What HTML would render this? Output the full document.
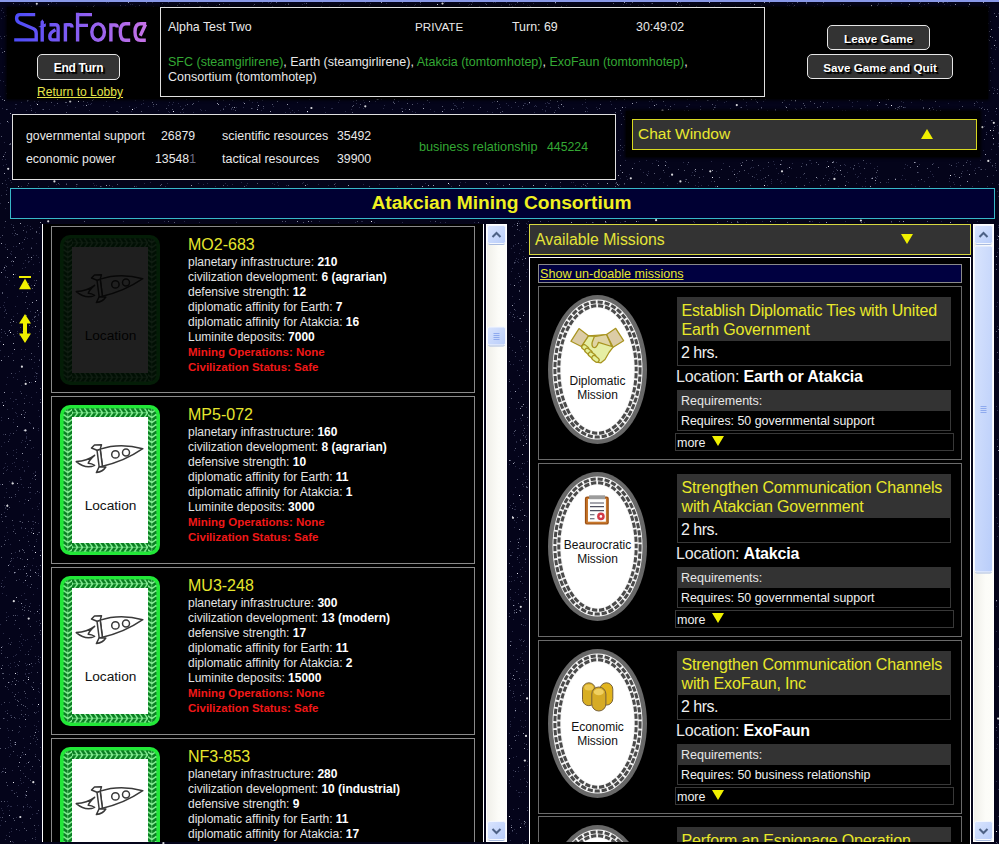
<!DOCTYPE html><html><head><meta charset="utf-8"><style>
*{margin:0;padding:0;box-sizing:border-box}
html,body{width:999px;height:844px;overflow:hidden;background:#04041a;font-family:"Liberation Sans",sans-serif;color:#e8e8e8}
.a{position:absolute}
.btn{position:absolute;background:#333333;border:1px solid #e6e6e6;border-radius:5px;color:#fff;font-weight:bold;font-size:12px;text-align:center;text-shadow:1px 1px 0 #000,2px 2px 1px #000}
.g{color:#34a834}
.box{position:absolute;border:1px solid #e0e0e0;background:#000}
.sb{position:absolute;background:linear-gradient(90deg,#f3f1e8,#fdfcf6 60%,#f0eee4);border:1px solid #fff}
.sbb{position:absolute;left:1px;width:17px;height:18px;border-radius:2px;background:linear-gradient(135deg,#d6e2fc,#bccffa);border:1px solid #e8eefc;box-shadow:0 1px 0 #a9b9d9}
.card{position:absolute;left:51px;width:424px;height:168px;border:1px solid #8a8a8a;background:#000}
.loc{position:absolute;left:8px;top:8px;width:100px;height:150px}
.loc .in{position:absolute;left:12px;top:11px;width:76px;height:126px;background:#fff;color:#000;font-size:13px;text-align:center}
.info{position:absolute;left:136px;top:9px;font-size:12px;line-height:15px;color:#e4e4e4}
.info .t{font-size:16px;color:#e6e62e;line-height:18px;margin-bottom:1px}
.info b{color:#fff}
.info .r{color:#f01818;font-weight:bold;font-size:11.5px}
.mc{position:absolute;left:538px;width:424px;height:174px;border:1px solid #6a6a6a;background:#000}
.oval{position:absolute;left:9px;top:7.5px;width:100px;height:150px}
.oval .ring{position:absolute;left:3px;top:3px;right:3px;bottom:3px;border-radius:50%;background:#d0d0d0}
.oval .in{position:absolute;left:12px;top:12px;right:12px;bottom:12px;border-radius:50%;background:#fff;color:#111;font-size:12px;text-align:center;line-height:14px}
.mt{position:absolute;left:138px;top:10px;width:274px;height:44px;background:#333333;color:#e8e82a;font-size:16px;letter-spacing:-0.16px;line-height:19px;padding:3.5px 0 0 4.5px}
.hrs{position:absolute;left:138px;top:54px;width:274px;height:25px;border:1px solid #383838;border-top:none;background:#000;color:#f0f0f0;font-size:16px;letter-spacing:-0.5px;padding:3px 0 0 3px}
.lo{position:absolute;left:137px;top:81px;font-size:16px;letter-spacing:-0.18px;color:#e8e8e8;white-space:nowrap}
.lo b{color:#fff}
.rq{position:absolute;left:138px;top:103px;width:274px;height:21px;background:#333333;color:#e8e8e8;font-size:12.5px;padding:4px 0 0 4px}
.rqs{position:absolute;left:138px;top:124px;width:274px;height:20px;border:1px solid #383838;border-top:none;background:#000;color:#f0f0f0;font-size:12.4px;padding:3px 0 0 3px}
.more{position:absolute;left:136px;top:146px;width:279px;height:18px;border:1px solid #383838;background:#000;color:#f0f0f0;font-size:12.5px;padding:2px 0 0 1px}
.tri{display:inline-block;width:0;height:0;border-left:6px solid transparent;border-right:6px solid transparent;border-top:10px solid #f0f000;margin-left:7px;vertical-align:1px}
</style></head><body>
<svg width="999" height="844" style="position:absolute;left:0;top:0"><path fill="#2a2c48" d="M185 105h1v1h-1zM381 99h1v1h-1zM104 0h1v1h-1zM549 103h1v1h-1zM930 171h1v1h-1zM514 337h1v1h-1zM860 1h1v1h-1zM489 182h1v1h-1zM665 105h1v1h-1zM513 246h1v1h-1zM623 4h1v1h-1zM795 108h1v1h-1zM28 778h1v1h-1zM996 517h1v1h-1zM520 546h1v1h-1zM519 253h1v1h-1zM457 108h1v1h-1zM3 269h1v1h-1zM982 107h1v1h-1zM19 641h1v1h-1zM270 3h1v1h-1zM17 296h1v1h-1zM520 286h1v1h-1zM162 3h1v1h-1zM1 332h1v1h-1zM512 831h1v1h-1zM510 284h1v1h-1zM1 10h1v1h-1zM510 690h1v1h-1zM202 6h1v1h-1zM32 319h1v1h-1zM31 646h1v1h-1zM304 3h1v1h-1zM904 107h1v1h-1zM510 726h1v1h-1zM827 102h1v1h-1zM886 182h1v1h-1zM39 613h1v1h-1zM32 814h1v1h-1zM417 103h1v1h-1zM668 167h1v1h-1zM18 785h1v1h-1zM208 6h1v1h-1zM844 164h1v1h-1zM3 633h1v1h-1zM856 183h1v1h-1zM516 522h1v1h-1zM750 1h1v1h-1zM2 580h1v1h-1zM519 663h1v1h-1zM6 384h1v1h-1zM714 6h1v1h-1zM35 831h1v1h-1zM515 487h1v1h-1zM31 807h1v1h-1zM446 1h1v1h-1zM4 356h1v1h-1zM169 112h1v1h-1zM805 107h1v1h-1zM34 356h1v1h-1zM12 408h1v1h-1zM414 5h1v1h-1zM695 185h1v1h-1zM20 636h1v1h-1zM10 398h1v1h-1zM16 654h1v1h-1zM526 781h1v1h-1zM493 2h1v1h-1zM6 164h1v1h-1zM77 184h1v1h-1zM522 495h1v1h-1zM515 278h1v1h-1zM40 683h1v1h-1zM178 103h1v1h-1zM13 377h1v1h-1zM509 581h1v1h-1zM14 696h1v1h-1zM15 666h1v1h-1zM997 666h1v1h-1zM998 816h1v1h-1zM9 810h1v1h-1zM94 185h1v1h-1zM383 108h1v1h-1zM870 163h1v1h-1zM39 262h1v1h-1zM525 726h1v1h-1zM773 5h1v1h-1zM457 99h1v1h-1zM16 452h1v1h-1zM1 808h1v1h-1zM878 4h1v1h-1zM298 110h1v1h-1zM21 249h1v1h-1zM454 105h1v1h-1zM35 656h1v1h-1zM509 407h1v1h-1zM621 113h1v1h-1zM329 6h1v1h-1zM646 160h1v1h-1zM4 311h1v1h-1zM33 273h1v1h-1zM7 297h1v1h-1zM984 126h1v1h-1zM25 349h1v1h-1zM361 221h1v1h-1zM29 673h1v1h-1zM15 399h1v1h-1zM711 181h1v1h-1zM25 674h1v1h-1zM653 183h1v1h-1zM509 733h1v1h-1zM6 527h1v1h-1zM778 173h1v1h-1zM172 104h1v1h-1zM42 109h1v1h-1zM967 221h1v1h-1zM9 682h1v1h-1zM302 4h1v1h-1zM997 410h1v1h-1zM232 184h1v1h-1zM527 104h1v1h-1zM15 718h1v1h-1zM21 595h1v1h-1zM76 186h1v1h-1zM990 162h1v1h-1zM512 268h1v1h-1zM649 101h1v1h-1zM7 687h1v1h-1zM776 168h1v1h-1zM986 132h1v1h-1zM27 664h1v1h-1zM26 324h1v1h-1zM9 571h1v1h-1zM924 181h1v1h-1zM29 359h1v1h-1zM809 160h1v1h-1zM4 497h1v1h-1zM715 107h1v1h-1zM996 154h1v1h-1zM5 244h1v1h-1zM0 484h1v1h-1zM522 350h1v1h-1zM384 105h1v1h-1zM817 178h1v1h-1zM153 6h1v1h-1zM26 110h1v1h-1zM524 770h1v1h-1zM15 104h1v1h-1zM523 430h1v1h-1zM996 606h1v1h-1zM59 184h1v1h-1zM33 594h1v1h-1zM183 112h1v1h-1zM806 165h1v1h-1zM751 167h1v1h-1zM339 5h1v1h-1zM518 262h1v1h-1zM513 245h1v1h-1zM15 108h1v1h-1zM11 325h1v1h-1zM2 810h1v1h-1zM38 509h1v1h-1zM4 307h1v1h-1zM9 0h1v1h-1zM526 682h1v1h-1zM510 505h1v1h-1zM35 333h1v1h-1zM26 430h1v1h-1zM412 111h1v1h-1zM652 163h1v1h-1zM3 587h1v1h-1zM23 716h1v1h-1zM223 3h1v1h-1zM40 550h1v1h-1zM16 449h1v1h-1zM13 656h1v1h-1zM757 179h1v1h-1zM131 111h1v1h-1zM9 832h1v1h-1zM509 613h1v1h-1zM5 401h1v1h-1zM18 490h1v1h-1zM331 108h1v1h-1zM30 569h1v1h-1zM686 7h1v1h-1zM31 686h1v1h-1zM29 332h1v1h-1zM13 422h1v1h-1zM336 1h1v1h-1zM460 182h1v1h-1zM31 397h1v1h-1zM231 109h1v1h-1zM15 274h1v1h-1zM30 229h1v1h-1zM30 483h1v1h-1zM118 112h1v1h-1zM762 221h1v1h-1zM11 642h1v1h-1zM32 550h1v1h-1zM998 143h1v1h-1zM523 760h1v1h-1zM23 582h1v1h-1zM771 179h1v1h-1zM911 184h1v1h-1zM18 692h1v1h-1zM817 4h1v1h-1zM220 110h1v1h-1zM513 433h1v1h-1zM24 226h1v1h-1zM518 735h1v1h-1zM542 109h1v1h-1zM525 346h1v1h-1zM28 261h1v1h-1zM0 237h1v1h-1zM10 806h1v1h-1zM290 112h1v1h-1zM12 692h1v1h-1zM26 232h1v1h-1zM587 108h1v1h-1zM35 472h1v1h-1zM527 807h1v1h-1zM527 749h1v1h-1zM11 684h1v1h-1zM17 664h1v1h-1zM23 514h1v1h-1zM523 473h1v1h-1zM430 221h1v1h-1zM734 169h1v1h-1zM966 1h1v1h-1zM990 71h1v1h-1zM521 645h1v1h-1zM967 160h1v1h-1zM998 27h1v1h-1zM17 379h1v1h-1zM928 109h1v1h-1zM40 766h1v1h-1zM771 183h1v1h-1zM14 462h1v1h-1zM23 615h1v1h-1zM4 512h1v1h-1zM527 5h1v1h-1zM840 4h1v1h-1zM217 100h1v1h-1zM509 780h1v1h-1zM993 143h1v1h-1zM685 179h1v1h-1zM948 103h1v1h-1zM527 425h1v1h-1zM207 183h1v1h-1zM527 331h1v1h-1zM514 580h1v1h-1zM5 247h1v1h-1zM998 686h1v1h-1zM515 244h1v1h-1zM332 108h1v1h-1zM38 410h1v1h-1zM514 696h1v1h-1zM198 101h1v1h-1zM33 447h1v1h-1zM499 104h1v1h-1zM872 177h1v1h-1zM35 639h1v1h-1zM38 532h1v1h-1zM979 107h1v1h-1zM4 442h1v1h-1zM173 102h1v1h-1zM3 165h1v1h-1zM660 178h1v1h-1zM996 631h1v1h-1zM23 639h1v1h-1zM566 5h1v1h-1zM522 356h1v1h-1zM27 639h1v1h-1zM826 1h1v1h-1zM445 222h1v1h-1zM658 161h1v1h-1zM0 307h1v1h-1zM767 110h1v1h-1zM37 320h1v1h-1zM524 766h1v1h-1zM25 797h1v1h-1zM513 757h1v1h-1zM392 109h1v1h-1zM285 112h1v1h-1zM19 830h1v1h-1zM21 288h1v1h-1zM961 176h1v1h-1zM885 104h1v1h-1zM0 96h1v1h-1zM993 59h1v1h-1zM21 643h1v1h-1zM325 112h1v1h-1zM857 177h1v1h-1zM857 101h1v1h-1zM12 392h1v1h-1zM511 555h1v1h-1zM674 104h1v1h-1zM942 2h1v1h-1zM29 440h1v1h-1zM991 149h1v1h-1zM167 0h1v1h-1zM123 221h1v1h-1zM6 93h1v1h-1zM514 717h1v1h-1zM6 492h1v1h-1zM20 479h1v1h-1zM519 555h1v1h-1zM511 576h1v1h-1zM35 754h1v1h-1zM30 603h1v1h-1zM796 0h1v1h-1zM24 747h1v1h-1zM13 525h1v1h-1zM510 312h1v1h-1zM575 185h1v1h-1zM997 744h1v1h-1zM28 651h1v1h-1zM969 3h1v1h-1zM518 106h1v1h-1zM602 7h1v1h-1zM17 331h1v1h-1zM991 61h1v1h-1zM865 186h1v1h-1zM512 350h1v1h-1zM271 2h1v1h-1zM511 334h1v1h-1zM302 183h1v1h-1zM31 247h1v1h-1zM988 111h1v1h-1zM525 103h1v1h-1zM35 372h1v1h-1zM7 728h1v1h-1zM6 595h1v1h-1zM988 23h1v1h-1zM106 2h1v1h-1zM241 182h1v1h-1zM197 2h1v1h-1zM956 166h1v1h-1zM548 103h1v1h-1zM515 506h1v1h-1zM487 184h1v1h-1zM479 1h1v1h-1zM924 4h1v1h-1zM14 624h1v1h-1zM25 797h1v1h-1zM997 536h1v1h-1zM4 536h1v1h-1zM1 704h1v1h-1zM955 176h1v1h-1zM665 0h1v1h-1zM164 6h1v1h-1zM495 2h1v1h-1zM517 316h1v1h-1zM26 669h1v1h-1zM305 107h1v1h-1zM902 175h1v1h-1zM36 737h1v1h-1zM277 182h1v1h-1zM911 102h1v1h-1zM850 167h1v1h-1zM518 221h1v1h-1zM12 790h1v1h-1zM363 100h1v1h-1zM35 839h1v1h-1zM991 48h1v1h-1zM132 4h1v1h-1zM510 840h1v1h-1zM29 545h1v1h-1zM19 521h1v1h-1zM31 382h1v1h-1zM611 104h1v1h-1zM36 392h1v1h-1zM897 107h1v1h-1zM335 186h1v1h-1zM928 177h1v1h-1zM523 727h1v1h-1zM666 162h1v1h-1zM106 101h1v1h-1zM8 805h1v1h-1zM571 182h1v1h-1zM997 439h1v1h-1zM967 170h1v1h-1zM38 430h1v1h-1zM877 166h1v1h-1zM13 419h1v1h-1zM992 120h1v1h-1zM13 246h1v1h-1zM26 566h1v1h-1zM10 663h1v1h-1zM21 783h1v1h-1zM38 825h1v1h-1zM35 713h1v1h-1zM519 360h1v1h-1zM6 488h1v1h-1zM901 3h1v1h-1zM8 747h1v1h-1zM520 569h1v1h-1zM522 653h1v1h-1zM715 105h1v1h-1zM307 112h1v1h-1zM468 5h1v1h-1zM520 720h1v1h-1zM468 7h1v1h-1zM534 112h1v1h-1zM936 181h1v1h-1zM38 101h1v1h-1zM39 605h1v1h-1zM30 226h1v1h-1zM528 221h1v1h-1zM0 80h1v1h-1zM134 108h1v1h-1zM518 589h1v1h-1zM994 68h1v1h-1zM800 177h1v1h-1zM5 577h1v1h-1zM13 558h1v1h-1zM596 107h1v1h-1zM11 715h1v1h-1zM708 185h1v1h-1zM997 252h1v1h-1zM765 181h1v1h-1zM8 178h1v1h-1zM485 3h1v1h-1zM520 342h1v1h-1zM5 507h1v1h-1zM970 161h1v1h-1zM38 314h1v1h-1zM8 689h1v1h-1zM5 711h1v1h-1zM796 109h1v1h-1zM738 222h1v1h-1zM998 372h1v1h-1zM4 317h1v1h-1zM520 657h1v1h-1zM189 3h1v1h-1zM8 539h1v1h-1zM517 671h1v1h-1zM526 407h1v1h-1zM610 101h1v1h-1zM876 178h1v1h-1zM4 154h1v1h-1zM974 170h1v1h-1zM526 331h1v1h-1zM983 150h1v1h-1zM33 524h1v1h-1zM997 235h1v1h-1zM289 108h1v1h-1zM21 186h1v1h-1zM39 662h1v1h-1zM515 466h1v1h-1zM32 666h1v1h-1zM13 842h1v1h-1zM2 108h1v1h-1zM96 185h1v1h-1zM25 376h1v1h-1zM792 163h1v1h-1zM12 233h1v1h-1zM24 766h1v1h-1zM153 106h1v1h-1zM288 3h1v1h-1zM103 105h1v1h-1zM795 101h1v1h-1zM975 168h1v1h-1zM516 790h1v1h-1zM21 484h1v1h-1zM13 455h1v1h-1zM30 105h1v1h-1zM833 171h1v1h-1zM25 682h1v1h-1zM10 180h1v1h-1zM478 109h1v1h-1zM520 418h1v1h-1zM26 683h1v1h-1zM35 663h1v1h-1zM520 439h1v1h-1zM787 222h1v1h-1zM24 766h1v1h-1zM535 105h1v1h-1zM23 248h1v1h-1zM13 566h1v1h-1zM444 109h1v1h-1zM29 749h1v1h-1zM16 104h1v1h-1zM27 225h1v1h-1zM21 527h1v1h-1zM40 312h1v1h-1zM492 112h1v1h-1zM19 579h1v1h-1zM25 441h1v1h-1zM616 183h1v1h-1zM15 373h1v1h-1zM327 1h1v1h-1zM555 3h1v1h-1zM15 552h1v1h-1zM995 167h1v1h-1zM340 4h1v1h-1zM11 560h1v1h-1zM22 440h1v1h-1zM514 605h1v1h-1zM303 182h1v1h-1zM90 104h1v1h-1zM38 691h1v1h-1zM789 5h1v1h-1zM32 228h1v1h-1zM522 368h1v1h-1zM954 184h1v1h-1zM199 222h1v1h-1zM520 249h1v1h-1zM38 759h1v1h-1zM717 100h1v1h-1zM516 408h1v1h-1zM965 1h1v1h-1zM527 479h1v1h-1zM236 107h1v1h-1zM522 108h1v1h-1zM12 481h1v1h-1zM526 538h1v1h-1zM89 110h1v1h-1zM625 160h1v1h-1zM31 6h1v1h-1zM434 111h1v1h-1zM956 0h1v1h-1zM5 270h1v1h-1zM997 125h1v1h-1zM88 104h1v1h-1zM8 122h1v1h-1zM988 11h1v1h-1zM907 165h1v1h-1zM0 350h1v1h-1zM338 222h1v1h-1zM513 384h1v1h-1zM148 222h1v1h-1zM519 792h1v1h-1zM518 282h1v1h-1zM23 569h1v1h-1zM39 227h1v1h-1zM307 184h1v1h-1zM905 107h1v1h-1zM862 186h1v1h-1zM527 761h1v1h-1zM753 167h1v1h-1zM35 741h1v1h-1zM30 423h1v1h-1zM977 102h1v1h-1zM740 107h1v1h-1zM761 5h1v1h-1zM4 227h1v1h-1zM667 7h1v1h-1zM527 461h1v1h-1zM29 492h1v1h-1zM0 624h1v1h-1zM14 336h1v1h-1zM646 174h1v1h-1zM904 168h1v1h-1zM30 649h1v1h-1zM2 646h1v1h-1zM887 0h1v1h-1zM987 186h1v1h-1zM36 243h1v1h-1zM203 184h1v1h-1zM525 558h1v1h-1zM519 223h1v1h-1zM37 588h1v1h-1zM949 178h1v1h-1zM949 181h1v1h-1zM3 305h1v1h-1zM201 110h1v1h-1zM513 619h1v1h-1zM253 5h1v1h-1zM1 420h1v1h-1zM620 139h1v1h-1zM996 47h1v1h-1zM21 102h1v1h-1zM35 471h1v1h-1zM4 467h1v1h-1zM525 571h1v1h-1zM998 359h1v1h-1zM262 2h1v1h-1zM620 155h1v1h-1zM12 353h1v1h-1zM747 109h1v1h-1zM21 385h1v1h-1zM36 813h1v1h-1zM514 263h1v1h-1zM998 13h1v1h-1zM328 185h1v1h-1zM15 466h1v1h-1zM525 826h1v1h-1zM38 569h1v1h-1zM179 3h1v1h-1zM510 721h1v1h-1zM17 672h1v1h-1zM644 183h1v1h-1zM687 106h1v1h-1zM962 171h1v1h-1zM509 833h1v1h-1zM905 179h1v1h-1zM922 100h1v1h-1zM91 103h1v1h-1zM988 39h1v1h-1zM516 258h1v1h-1zM19 647h1v1h-1zM842 110h1v1h-1zM561 100h1v1h-1zM518 771h1v1h-1zM34 772h1v1h-1zM20 780h1v1h-1zM15 699h1v1h-1zM597 109h1v1h-1zM25 599h1v1h-1zM559 108h1v1h-1zM184 221h1v1h-1zM34 476h1v1h-1zM684 110h1v1h-1zM668 1h1v1h-1zM25 260h1v1h-1zM989 7h1v1h-1zM13 277h1v1h-1zM26 599h1v1h-1zM643 172h1v1h-1zM26 438h1v1h-1zM620 170h1v1h-1zM40 329h1v1h-1zM672 7h1v1h-1zM15 608h1v1h-1zM30 498h1v1h-1zM996 730h1v1h-1zM716 171h1v1h-1zM19 469h1v1h-1zM406 5h1v1h-1zM324 107h1v1h-1zM649 107h1v1h-1zM527 269h1v1h-1zM523 530h1v1h-1zM825 184h1v1h-1zM763 178h1v1h-1zM87 102h1v1h-1zM644 5h1v1h-1zM5 159h1v1h-1zM34 376h1v1h-1zM36 5h1v1h-1zM512 226h1v1h-1zM586 186h1v1h-1zM992 63h1v1h-1zM29 402h1v1h-1zM73 99h1v1h-1zM533 3h1v1h-1zM4 142h1v1h-1zM976 101h1v1h-1zM33 264h1v1h-1zM36 621h1v1h-1zM32 704h1v1h-1zM516 756h1v1h-1zM36 712h1v1h-1zM998 649h1v1h-1zM524 103h1v1h-1zM411 7h1v1h-1zM376 99h1v1h-1zM24 414h1v1h-1zM527 679h1v1h-1zM774 164h1v1h-1zM28 531h1v1h-1zM22 822h1v1h-1zM519 819h1v1h-1zM885 5h1v1h-1zM36 726h1v1h-1zM6 516h1v1h-1zM1 38h1v1h-1zM33 255h1v1h-1zM624 221h1v1h-1zM286 185h1v1h-1zM27 585h1v1h-1zM37 813h1v1h-1zM495 221h1v1h-1zM7 109h1v1h-1zM513 776h1v1h-1zM11 224h1v1h-1zM664 172h1v1h-1zM29 807h1v1h-1zM21 442h1v1h-1zM379 184h1v1h-1zM4 331h1v1h-1zM519 230h1v1h-1zM523 3h1v1h-1zM523 365h1v1h-1zM16 234h1v1h-1zM524 824h1v1h-1zM715 186h1v1h-1zM515 419h1v1h-1zM268 2h1v1h-1zM17 615h1v1h-1zM143 103h1v1h-1zM872 7h1v1h-1zM31 108h1v1h-1zM511 4h1v1h-1zM620 0h1v1h-1zM812 7h1v1h-1zM509 783h1v1h-1zM525 685h1v1h-1zM26 665h1v1h-1zM620 178h1v1h-1zM515 509h1v1h-1zM829 178h1v1h-1zM518 273h1v1h-1zM36 255h1v1h-1zM514 829h1v1h-1zM0 123h1v1h-1zM513 494h1v1h-1zM1 48h1v1h-1zM515 4h1v1h-1zM158 110h1v1h-1zM7 94h1v1h-1zM56 184h1v1h-1zM272 183h1v1h-1zM510 724h1v1h-1zM1 772h1v1h-1zM375 101h1v1h-1zM525 619h1v1h-1zM949 164h1v1h-1zM8 643h1v1h-1zM21 442h1v1h-1zM509 5h1v1h-1zM3 771h1v1h-1zM550 107h1v1h-1zM278 185h1v1h-1zM193 112h1v1h-1zM27 185h1v1h-1zM545 110h1v1h-1zM509 347h1v1h-1zM819 7h1v1h-1zM25 640h1v1h-1zM998 526h1v1h-1zM393 101h1v1h-1zM6 284h1v1h-1zM369 5h1v1h-1zM871 178h1v1h-1zM94 5h1v1h-1zM54 105h1v1h-1zM17 755h1v1h-1zM26 763h1v1h-1zM509 763h1v1h-1zM874 168h1v1h-1zM920 2h1v1h-1zM792 3h1v1h-1zM730 108h1v1h-1zM587 111h1v1h-1zM198 183h1v1h-1zM14 529h1v1h-1zM814 6h1v1h-1zM24 470h1v1h-1zM785 106h1v1h-1zM223 108h1v1h-1zM38 457h1v1h-1zM606 222h1v1h-1zM154 7h1v1h-1zM986 5h1v1h-1zM517 577h1v1h-1zM9 481h1v1h-1zM523 265h1v1h-1zM791 168h1v1h-1zM32 478h1v1h-1zM520 680h1v1h-1zM273 106h1v1h-1zM13 316h1v1h-1zM996 406h1v1h-1zM261 110h1v1h-1zM356 103h1v1h-1zM514 669h1v1h-1zM998 248h1v1h-1zM619 184h1v1h-1zM527 224h1v1h-1zM509 576h1v1h-1zM813 180h1v1h-1zM669 176h1v1h-1zM12 841h1v1h-1zM38 428h1v1h-1zM48 186h1v1h-1zM339 100h1v1h-1zM510 391h1v1h-1zM838 186h1v1h-1zM34 362h1v1h-1zM860 173h1v1h-1zM285 4h1v1h-1zM17 416h1v1h-1zM20 569h1v1h-1zM787 168h1v1h-1zM200 109h1v1h-1zM32 238h1v1h-1zM10 743h1v1h-1zM7 710h1v1h-1zM693 221h1v1h-1zM13 401h1v1h-1zM243 102h1v1h-1zM76 184h1v1h-1zM513 321h1v1h-1zM760 170h1v1h-1zM24 471h1v1h-1zM21 755h1v1h-1zM998 196h1v1h-1zM509 314h1v1h-1zM38 731h1v1h-1zM953 182h1v1h-1zM22 467h1v1h-1zM866 163h1v1h-1zM223 100h1v1h-1zM627 179h1v1h-1zM247 183h1v1h-1zM761 179h1v1h-1zM27 804h1v1h-1zM5 310h1v1h-1zM673 1h1v1h-1zM525 436h1v1h-1zM1 417h1v1h-1zM947 2h1v1h-1zM121 107h1v1h-1zM958 162h1v1h-1zM547 4h1v1h-1zM40 747h1v1h-1zM39 271h1v1h-1zM548 221h1v1h-1zM506 2h1v1h-1zM33 528h1v1h-1zM14 230h1v1h-1zM32 368h1v1h-1zM515 700h1v1h-1zM32 327h1v1h-1zM520 640h1v1h-1zM6 452h1v1h-1zM343 4h1v1h-1zM2 593h1v1h-1zM939 106h1v1h-1zM1 446h1v1h-1zM25 267h1v1h-1zM516 833h1v1h-1zM746 222h1v1h-1zM257 102h1v1h-1zM1 583h1v1h-1zM765 99h1v1h-1zM514 224h1v1h-1zM985 169h1v1h-1zM4 586h1v1h-1zM30 311h1v1h-1zM611 104h1v1h-1zM165 186h1v1h-1zM998 789h1v1h-1zM278 0h1v1h-1zM135 100h1v1h-1zM519 639h1v1h-1zM24 398h1v1h-1zM367 0h1v1h-1zM516 442h1v1h-1zM16 322h1v1h-1zM38 661h1v1h-1zM990 159h1v1h-1zM49 109h1v1h-1zM27 564h1v1h-1zM586 107h1v1h-1zM32 404h1v1h-1zM390 1h1v1h-1zM9 439h1v1h-1zM14 742h1v1h-1zM39 620h1v1h-1zM525 515h1v1h-1zM895 178h1v1h-1zM3 81h1v1h-1zM27 320h1v1h-1zM20 778h1v1h-1zM17 333h1v1h-1zM846 181h1v1h-1zM34 280h1v1h-1zM512 697h1v1h-1zM25 794h1v1h-1zM959 101h1v1h-1zM38 721h1v1h-1zM803 174h1v1h-1zM469 4h1v1h-1zM31 686h1v1h-1zM246 185h1v1h-1zM616 221h1v1h-1zM515 711h1v1h-1zM22 606h1v1h-1zM183 108h1v1h-1zM624 145h1v1h-1zM996 114h1v1h-1zM761 108h1v1h-1zM28 787h1v1h-1zM694 222h1v1h-1zM180 106h1v1h-1zM433 0h1v1h-1zM51 2h1v1h-1zM527 765h1v1h-1zM513 809h1v1h-1zM137 1h1v1h-1zM319 221h1v1h-1zM930 110h1v1h-1zM40 399h1v1h-1zM740 163h1v1h-1zM39 692h1v1h-1zM26 436h1v1h-1zM853 169h1v1h-1zM16 413h1v1h-1zM521 639h1v1h-1zM787 2h1v1h-1zM518 731h1v1h-1zM33 738h1v1h-1zM167 183h1v1h-1zM38 523h1v1h-1zM11 806h1v1h-1zM31 672h1v1h-1zM37 506h1v1h-1zM652 101h1v1h-1zM25 726h1v1h-1zM550 0h1v1h-1zM38 315h1v1h-1zM0 341h1v1h-1zM558 105h1v1h-1zM877 176h1v1h-1zM31 285h1v1h-1zM463 0h1v1h-1zM24 277h1v1h-1zM27 806h1v1h-1zM523 601h1v1h-1zM35 784h1v1h-1zM573 108h1v1h-1zM487 111h1v1h-1zM522 567h1v1h-1zM14 573h1v1h-1zM811 163h1v1h-1zM514 520h1v1h-1zM585 102h1v1h-1zM10 754h1v1h-1zM9 674h1v1h-1zM870 100h1v1h-1zM39 609h1v1h-1zM36 539h1v1h-1zM513 809h1v1h-1zM514 527h1v1h-1zM18 487h1v1h-1zM512 566h1v1h-1zM918 180h1v1h-1zM519 539h1v1h-1zM37 706h1v1h-1zM397 186h1v1h-1zM523 474h1v1h-1zM510 599h1v1h-1zM523 263h1v1h-1zM593 222h1v1h-1zM858 176h1v1h-1zM998 132h1v1h-1zM526 276h1v1h-1zM692 172h1v1h-1zM227 185h1v1h-1zM12 260h1v1h-1zM525 562h1v1h-1zM23 738h1v1h-1zM26 277h1v1h-1zM231 108h1v1h-1zM36 541h1v1h-1zM161 7h1v1h-1zM7 720h1v1h-1zM169 102h1v1h-1zM18 681h1v1h-1zM624 119h1v1h-1zM515 260h1v1h-1zM15 412h1v1h-1zM38 642h1v1h-1zM23 537h1v1h-1zM663 5h1v1h-1zM28 100h1v1h-1zM2 159h1v1h-1zM517 370h1v1h-1zM19 371h1v1h-1zM21 528h1v1h-1zM5 309h1v1h-1zM523 486h1v1h-1zM23 430h1v1h-1zM5 265h1v1h-1zM772 0h1v1h-1zM825 175h1v1h-1zM522 843h1v1h-1zM703 176h1v1h-1zM972 186h1v1h-1zM27 101h1v1h-1zM677 183h1v1h-1zM11 790h1v1h-1zM19 731h1v1h-1zM125 7h1v1h-1zM35 493h1v1h-1zM689 104h1v1h-1zM639 161h1v1h-1zM689 4h1v1h-1zM630 4h1v1h-1zM1 650h1v1h-1zM36 566h1v1h-1zM680 2h1v1h-1zM13 225h1v1h-1zM4 66h1v1h-1zM526 476h1v1h-1zM207 183h1v1h-1zM787 5h1v1h-1zM515 592h1v1h-1zM573 182h1v1h-1zM524 702h1v1h-1zM398 101h1v1h-1zM521 348h1v1h-1zM515 708h1v1h-1zM679 7h1v1h-1zM14 285h1v1h-1zM547 102h1v1h-1zM440 222h1v1h-1zM26 433h1v1h-1zM17 805h1v1h-1zM607 1h1v1h-1zM402 222h1v1h-1zM750 3h1v1h-1zM995 165h1v1h-1zM524 672h1v1h-1zM402 108h1v1h-1zM129 106h1v1h-1zM5 276h1v1h-1zM8 331h1v1h-1zM20 699h1v1h-1zM941 221h1v1h-1zM1 517h1v1h-1zM511 641h1v1h-1zM518 792h1v1h-1zM108 2h1v1h-1zM520 610h1v1h-1zM25 663h1v1h-1zM992 166h1v1h-1zM852 102h1v1h-1zM527 391h1v1h-1zM996 781h1v1h-1zM623 150h1v1h-1zM463 107h1v1h-1zM38 257h1v1h-1zM523 425h1v1h-1zM14 662h1v1h-1zM25 237h1v1h-1zM1 18h1v1h-1zM546 183h1v1h-1zM511 248h1v1h-1zM858 163h1v1h-1zM803 7h1v1h-1zM732 171h1v1h-1zM784 100h1v1h-1zM40 657h1v1h-1zM12 265h1v1h-1zM21 634h1v1h-1zM845 110h1v1h-1zM522 384h1v1h-1zM512 552h1v1h-1zM465 182h1v1h-1zM521 684h1v1h-1zM516 648h1v1h-1zM5 839h1v1h-1zM30 492h1v1h-1zM511 271h1v1h-1zM16 817h1v1h-1zM487 7h1v1h-1zM9 702h1v1h-1zM38 688h1v1h-1zM363 184h1v1h-1zM27 708h1v1h-1zM168 111h1v1h-1zM921 6h1v1h-1zM216 5h1v1h-1zM297 102h1v1h-1zM25 795h1v1h-1zM539 0h1v1h-1zM3 768h1v1h-1zM16 246h1v1h-1zM763 101h1v1h-1zM21 479h1v1h-1zM775 221h1v1h-1zM436 1h1v1h-1zM997 737h1v1h-1zM995 111h1v1h-1zM6 184h1v1h-1zM274 184h1v1h-1zM7 409h1v1h-1zM39 492h1v1h-1zM638 5h1v1h-1zM6 35h1v1h-1zM525 437h1v1h-1zM513 600h1v1h-1zM338 102h1v1h-1zM24 503h1v1h-1zM244 186h1v1h-1zM168 105h1v1h-1zM1 337h1v1h-1zM38 186h1v1h-1zM23 782h1v1h-1zM353 101h1v1h-1zM430 1h1v1h-1zM292 110h1v1h-1zM834 174h1v1h-1zM10 715h1v1h-1zM525 679h1v1h-1zM809 182h1v1h-1zM523 663h1v1h-1zM7 466h1v1h-1zM26 437h1v1h-1zM515 356h1v1h-1zM700 106h1v1h-1zM83 105h1v1h-1zM11 471h1v1h-1zM32 521h1v1h-1zM664 172h1v1h-1zM513 364h1v1h-1zM886 99h1v1h-1zM524 778h1v1h-1zM492 102h1v1h-1zM8 665h1v1h-1zM27 698h1v1h-1zM33 473h1v1h-1zM724 102h1v1h-1zM522 350h1v1h-1zM22 559h1v1h-1zM135 6h1v1h-1zM10 745h1v1h-1zM101 186h1v1h-1zM998 225h1v1h-1zM11 831h1v1h-1zM4 302h1v1h-1zM509 507h1v1h-1zM524 743h1v1h-1zM708 100h1v1h-1zM978 167h1v1h-1zM24 593h1v1h-1zM420 4h1v1h-1zM38 711h1v1h-1zM252 102h1v1h-1zM27 238h1v1h-1zM878 3h1v1h-1zM444 2h1v1h-1zM20 727h1v1h-1zM735 6h1v1h-1zM996 478h1v1h-1zM620 222h1v1h-1zM36 378h1v1h-1zM932 107h1v1h-1zM25 605h1v1h-1zM24 356h1v1h-1zM136 107h1v1h-1zM23 773h1v1h-1zM472 2h1v1h-1zM527 227h1v1h-1zM7 806h1v1h-1zM527 371h1v1h-1zM515 685h1v1h-1zM6 617h1v1h-1zM524 792h1v1h-1zM777 179h1v1h-1zM17 557h1v1h-1zM7 532h1v1h-1zM514 509h1v1h-1zM812 221h1v1h-1zM517 261h1v1h-1zM526 223h1v1h-1zM950 5h1v1h-1zM515 262h1v1h-1zM888 107h1v1h-1zM767 185h1v1h-1zM545 103h1v1h-1zM365 2h1v1h-1zM977 0h1v1h-1zM512 6h1v1h-1zM13 558h1v1h-1zM622 147h1v1h-1zM33 521h1v1h-1zM0 817h1v1h-1zM35 112h1v1h-1zM998 825h1v1h-1zM970 164h1v1h-1zM997 523h1v1h-1zM164 221h1v1h-1zM656 160h1v1h-1zM670 109h1v1h-1zM741 7h1v1h-1zM12 463h1v1h-1zM5 463h1v1h-1zM998 146h1v1h-1zM891 222h1v1h-1zM456 106h1v1h-1zM511 819h1v1h-1zM978 181h1v1h-1zM351 109h1v1h-1zM34 321h1v1h-1zM25 654h1v1h-1zM582 104h1v1h-1zM22 242h1v1h-1zM638 221h1v1h-1zM526 435h1v1h-1zM514 613h1v1h-1zM651 3h1v1h-1zM355 222h1v1h-1zM905 164h1v1h-1zM992 87h1v1h-1zM17 674h1v1h-1zM27 535h1v1h-1zM27 461h1v1h-1zM141 104h1v1h-1zM34 790h1v1h-1zM359 107h1v1h-1zM754 177h1v1h-1zM509 464h1v1h-1zM514 421h1v1h-1zM22 292h1v1h-1zM771 181h1v1h-1zM780 181h1v1h-1zM34 316h1v1h-1zM35 283h1v1h-1zM444 109h1v1h-1zM514 252h1v1h-1zM997 191h1v1h-1zM865 178h1v1h-1zM150 182h1v1h-1zM26 676h1v1h-1zM586 222h1v1h-1zM554 6h1v1h-1zM525 713h1v1h-1zM526 646h1v1h-1zM459 3h1v1h-1zM0 203h1v1h-1zM143 100h1v1h-1zM522 509h1v1h-1zM518 388h1v1h-1zM40 576h1v1h-1zM17 313h1v1h-1zM996 601h1v1h-1zM521 420h1v1h-1zM297 0h1v1h-1zM679 5h1v1h-1zM990 80h1v1h-1zM756 174h1v1h-1zM1 195h1v1h-1zM19 4h1v1h-1zM4 718h1v1h-1zM521 245h1v1h-1zM520 346h1v1h-1zM205 110h1v1h-1zM14 744h1v1h-1zM522 711h1v1h-1zM667 185h1v1h-1zM523 618h1v1h-1zM643 4h1v1h-1zM7 187h1v1h-1zM101 0h1v1h-1zM525 651h1v1h-1zM994 90h1v1h-1zM665 0h1v1h-1zM525 625h1v1h-1zM529 5h1v1h-1zM28 715h1v1h-1zM272 1h1v1h-1zM23 460h1v1h-1zM995 49h1v1h-1zM461 108h1v1h-1zM979 167h1v1h-1zM449 184h1v1h-1zM374 222h1v1h-1zM789 104h1v1h-1zM34 725h1v1h-1zM996 748h1v1h-1zM663 182h1v1h-1zM401 0h1v1h-1zM819 222h1v1h-1zM335 183h1v1h-1zM109 106h1v1h-1zM6 470h1v1h-1zM835 173h1v1h-1zM180 106h1v1h-1zM6 612h1v1h-1zM5 85h1v1h-1zM75 107h1v1h-1zM997 843h1v1h-1zM639 0h1v1h-1zM806 178h1v1h-1zM233 109h1v1h-1zM6 15h1v1h-1zM184 4h1v1h-1zM23 515h1v1h-1zM513 770h1v1h-1zM519 796h1v1h-1zM415 112h1v1h-1zM7 469h1v1h-1zM10 433h1v1h-1zM599 0h1v1h-1zM23 263h1v1h-1zM340 4h1v1h-1zM19 335h1v1h-1zM827 1h1v1h-1zM899 108h1v1h-1zM560 186h1v1h-1zM25 840h1v1h-1zM9 756h1v1h-1zM847 172h1v1h-1zM231 0h1v1h-1zM974 105h1v1h-1zM648 173h1v1h-1zM136 186h1v1h-1zM555 110h1v1h-1zM16 792h1v1h-1zM294 112h1v1h-1zM39 359h1v1h-1zM401 108h1v1h-1zM473 105h1v1h-1zM524 640h1v1h-1zM526 231h1v1h-1zM0 825h1v1h-1zM857 7h1v1h-1zM25 499h1v1h-1zM781 183h1v1h-1zM32 565h1v1h-1zM423 104h1v1h-1zM35 698h1v1h-1zM5 508h1v1h-1zM529 103h1v1h-1zM15 496h1v1h-1zM526 516h1v1h-1zM243 107h1v1h-1zM523 256h1v1h-1zM7 801h1v1h-1zM263 108h1v1h-1zM726 101h1v1h-1zM34 292h1v1h-1zM624 184h1v1h-1zM13 450h1v1h-1zM581 186h1v1h-1zM994 88h1v1h-1zM10 253h1v1h-1zM526 272h1v1h-1zM509 549h1v1h-1zM14 235h1v1h-1zM83 1h1v1h-1zM34 516h1v1h-1zM364 102h1v1h-1zM8 730h1v1h-1zM7 377h1v1h-1zM12 770h1v1h-1zM309 99h1v1h-1zM536 106h1v1h-1zM696 100h1v1h-1zM26 576h1v1h-1zM26 436h1v1h-1zM38 366h1v1h-1zM11 828h1v1h-1zM838 106h1v1h-1zM832 173h1v1h-1zM509 379h1v1h-1zM520 779h1v1h-1zM944 4h1v1h-1zM687 164h1v1h-1zM28 624h1v1h-1zM21 349h1v1h-1zM521 823h1v1h-1zM36 103h1v1h-1zM546 106h1v1h-1zM307 111h1v1h-1zM23 807h1v1h-1zM4 268h1v1h-1zM0 36h1v1h-1zM152 2h1v1h-1zM2 72h1v1h-1zM711 161h1v1h-1zM15 655h1v1h-1zM41 7h1v1h-1zM2 72h1v1h-1zM518 594h1v1h-1zM5 180h1v1h-1zM867 105h1v1h-1zM998 133h1v1h-1zM998 184h1v1h-1zM22 645h1v1h-1zM867 110h1v1h-1zM1 820h1v1h-1zM933 176h1v1h-1zM39 331h1v1h-1zM30 769h1v1h-1zM225 183h1v1h-1zM5 657h1v1h-1zM125 5h1v1h-1zM521 468h1v1h-1zM39 632h1v1h-1zM508 105h1v1h-1zM901 179h1v1h-1zM229 4h1v1h-1zM8 616h1v1h-1zM9 564h1v1h-1zM39 503h1v1h-1zM513 655h1v1h-1zM29 761h1v1h-1zM30 736h1v1h-1zM514 303h1v1h-1zM756 101h1v1h-1zM36 744h1v1h-1zM524 463h1v1h-1zM46 102h1v1h-1zM836 162h1v1h-1zM6 190h1v1h-1zM977 221h1v1h-1zM233 109h1v1h-1zM515 310h1v1h-1zM19 550h1v1h-1zM28 3h1v1h-1zM625 107h1v1h-1zM915 186h1v1h-1zM197 7h1v1h-1zM523 625h1v1h-1zM427 100h1v1h-1zM17 404h1v1h-1zM25 697h1v1h-1zM781 164h1v1h-1zM21 710h1v1h-1zM252 108h1v1h-1zM511 581h1v1h-1zM788 176h1v1h-1zM919 164h1v1h-1zM28 673h1v1h-1zM11 254h1v1h-1zM757 179h1v1h-1zM33 558h1v1h-1zM822 5h1v1h-1zM168 2h1v1h-1zM783 174h1v1h-1zM796 177h1v1h-1zM207 3h1v1h-1zM40 634h1v1h-1zM694 170h1v1h-1zM519 468h1v1h-1zM32 530h1v1h-1zM659 179h1v1h-1zM87 6h1v1h-1zM993 175h1v1h-1zM16 399h1v1h-1zM151 1h1v1h-1zM852 106h1v1h-1zM629 174h1v1h-1zM322 2h1v1h-1zM148 106h1v1h-1zM997 302h1v1h-1zM10 667h1v1h-1zM992 183h1v1h-1zM363 108h1v1h-1zM10 544h1v1h-1zM8 737h1v1h-1zM997 337h1v1h-1zM519 562h1v1h-1zM405 109h1v1h-1zM3 434h1v1h-1zM723 163h1v1h-1zM23 810h1v1h-1zM985 121h1v1h-1zM748 173h1v1h-1zM524 432h1v1h-1zM36 376h1v1h-1zM683 162h1v1h-1zM2 8h1v1h-1zM506 103h1v1h-1zM763 168h1v1h-1zM40 340h1v1h-1zM901 101h1v1h-1zM20 477h1v1h-1zM262 100h1v1h-1zM6 835h1v1h-1zM522 583h1v1h-1zM701 185h1v1h-1zM551 186h1v1h-1zM20 650h1v1h-1zM524 7h1v1h-1zM513 691h1v1h-1zM781 180h1v1h-1zM526 329h1v1h-1zM517 559h1v1h-1zM848 182h1v1h-1zM864 222h1v1h-1zM24 288h1v1h-1zM698 186h1v1h-1zM22 268h1v1h-1zM501 5h1v1h-1zM34 101h1v1h-1zM425 183h1v1h-1zM523 553h1v1h-1zM36 573h1v1h-1zM793 6h1v1h-1zM802 163h1v1h-1zM407 99h1v1h-1zM15 306h1v1h-1zM11 251h1v1h-1zM24 3h1v1h-1zM918 172h1v1h-1zM512 316h1v1h-1zM16 430h1v1h-1zM35 829h1v1h-1zM510 364h1v1h-1zM698 182h1v1h-1zM18 601h1v1h-1zM370 3h1v1h-1zM236 222h1v1h-1zM215 186h1v1h-1zM175 0h1v1h-1zM859 166h1v1h-1zM875 183h1v1h-1zM345 111h1v1h-1zM28 466h1v1h-1zM990 21h1v1h-1zM514 435h1v1h-1zM845 221h1v1h-1zM785 182h1v1h-1zM429 102h1v1h-1zM810 160h1v1h-1zM932 174h1v1h-1zM249 100h1v1h-1zM36 729h1v1h-1zM5 277h1v1h-1zM510 673h1v1h-1zM525 720h1v1h-1zM523 251h1v1h-1zM687 99h1v1h-1zM615 183h1v1h-1zM27 254h1v1h-1zM19 501h1v1h-1zM903 102h1v1h-1zM24 607h1v1h-1zM810 221h1v1h-1zM691 175h1v1h-1zM517 539h1v1h-1zM37 373h1v1h-1zM773 161h1v1h-1zM34 613h1v1h-1zM980 160h1v1h-1zM736 177h1v1h-1zM164 7h1v1h-1zM521 726h1v1h-1zM933 163h1v1h-1zM318 184h1v1h-1zM26 231h1v1h-1zM980 169h1v1h-1zM768 166h1v1h-1zM982 102h1v1h-1zM950 186h1v1h-1zM386 3h1v1h-1zM993 128h1v1h-1zM746 105h1v1h-1zM66 183h1v1h-1zM23 330h1v1h-1zM144 183h1v1h-1zM522 433h1v1h-1zM514 450h1v1h-1zM620 149h1v1h-1zM362 221h1v1h-1zM865 181h1v1h-1zM518 545h1v1h-1zM114 100h1v1h-1zM9 280h1v1h-1zM67 105h1v1h-1zM22 331h1v1h-1zM20 327h1v1h-1zM35 800h1v1h-1zM521 396h1v1h-1zM455 105h1v1h-1zM25 673h1v1h-1zM514 450h1v1h-1zM415 4h1v1h-1zM996 306h1v1h-1zM998 648h1v1h-1zM31 259h1v1h-1zM257 107h1v1h-1zM453 103h1v1h-1zM35 837h1v1h-1zM836 169h1v1h-1zM511 107h1v1h-1zM512 631h1v1h-1zM518 0h1v1h-1zM28 262h1v1h-1zM998 227h1v1h-1zM272 104h1v1h-1zM30 806h1v1h-1zM956 163h1v1h-1zM26 395h1v1h-1zM634 163h1v1h-1zM746 102h1v1h-1zM93 183h1v1h-1zM18 732h1v1h-1zM26 332h1v1h-1zM4 505h1v1h-1zM500 107h1v1h-1zM3 468h1v1h-1zM117 0h1v1h-1zM150 0h1v1h-1zM3 813h1v1h-1zM23 754h1v1h-1zM5 208h1v1h-1zM37 337h1v1h-1zM997 326h1v1h-1zM112 186h1v1h-1zM648 171h1v1h-1zM7 33h1v1h-1zM827 161h1v1h-1zM888 182h1v1h-1zM732 0h1v1h-1zM536 0h1v1h-1zM32 508h1v1h-1zM871 6h1v1h-1zM640 169h1v1h-1zM130 4h1v1h-1zM534 106h1v1h-1zM494 101h1v1h-1zM225 106h1v1h-1zM31 448h1v1h-1zM180 112h1v1h-1zM521 792h1v1h-1zM11 746h1v1h-1zM22 522h1v1h-1zM38 573h1v1h-1zM29 261h1v1h-1zM512 296h1v1h-1zM845 165h1v1h-1zM23 487h1v1h-1zM11 182h1v1h-1zM19 718h1v1h-1zM186 99h1v1h-1zM510 786h1v1h-1zM518 456h1v1h-1zM855 174h1v1h-1zM232 100h1v1h-1zM39 416h1v1h-1zM497 184h1v1h-1zM545 111h1v1h-1zM516 441h1v1h-1zM38 656h1v1h-1zM430 109h1v1h-1zM56 3h1v1h-1zM834 167h1v1h-1zM39 233h1v1h-1zM3 12h1v1h-1zM998 724h1v1h-1zM750 168h1v1h-1zM39 625h1v1h-1zM626 176h1v1h-1zM451 186h1v1h-1zM510 597h1v1h-1zM20 391h1v1h-1zM9 435h1v1h-1zM737 173h1v1h-1zM29 304h1v1h-1zM8 59h1v1h-1zM626 3h1v1h-1zM4 16h1v1h-1zM518 259h1v1h-1zM474 222h1v1h-1zM686 106h1v1h-1z"/><path fill="#55586e" d="M524 428h1v1h-1zM288 4h1v1h-1zM742 162h1v1h-1zM28 257h1v1h-1zM992 165h1v1h-1zM688 182h1v1h-1zM526 486h1v1h-1zM35 316h1v1h-1zM187 1h1v1h-1zM794 5h1v1h-1zM809 221h1v1h-1zM1 801h1v1h-1zM34 712h1v1h-1zM24 610h1v1h-1zM24 239h1v1h-1zM519 538h1v1h-1zM968 6h1v1h-1zM998 494h1v1h-1zM515 448h1v1h-1zM518 243h1v1h-1zM903 107h1v1h-1zM14 820h1v1h-1zM951 165h1v1h-1zM21 359h1v1h-1zM791 100h1v1h-1zM966 162h1v1h-1zM25 380h1v1h-1zM933 109h1v1h-1zM989 90h1v1h-1zM1 329h1v1h-1zM518 603h1v1h-1zM31 353h1v1h-1zM986 134h1v1h-1zM38 346h1v1h-1zM518 402h1v1h-1zM57 103h1v1h-1zM502 111h1v1h-1zM585 185h1v1h-1zM728 179h1v1h-1zM11 373h1v1h-1zM636 102h1v1h-1zM663 170h1v1h-1zM31 248h1v1h-1zM899 221h1v1h-1zM806 2h1v1h-1zM875 177h1v1h-1zM100 186h1v1h-1zM40 623h1v1h-1zM40 565h1v1h-1zM958 0h1v1h-1zM38 810h1v1h-1zM985 115h1v1h-1zM511 748h1v1h-1zM523 435h1v1h-1zM11 261h1v1h-1zM540 221h1v1h-1zM321 6h1v1h-1zM598 183h1v1h-1zM663 101h1v1h-1zM139 5h1v1h-1zM796 186h1v1h-1zM66 112h1v1h-1zM2 183h1v1h-1zM18 569h1v1h-1zM530 6h1v1h-1zM36 280h1v1h-1zM39 360h1v1h-1zM990 1h1v1h-1zM525 593h1v1h-1zM768 175h1v1h-1zM592 222h1v1h-1zM695 171h1v1h-1zM7 277h1v1h-1zM511 825h1v1h-1zM7 249h1v1h-1zM901 106h1v1h-1zM620 145h1v1h-1zM996 727h1v1h-1zM739 180h1v1h-1zM927 221h1v1h-1zM847 0h1v1h-1zM525 597h1v1h-1zM254 4h1v1h-1zM996 269h1v1h-1zM513 503h1v1h-1zM17 234h1v1h-1zM526 242h1v1h-1zM516 671h1v1h-1zM65 102h1v1h-1zM12 681h1v1h-1zM5 821h1v1h-1zM727 221h1v1h-1zM4 702h1v1h-1zM109 185h1v1h-1zM921 179h1v1h-1zM560 182h1v1h-1zM29 325h1v1h-1zM519 678h1v1h-1zM229 104h1v1h-1zM618 185h1v1h-1zM522 414h1v1h-1zM3 718h1v1h-1zM407 103h1v1h-1zM25 714h1v1h-1zM32 838h1v1h-1zM15 233h1v1h-1zM521 321h1v1h-1zM244 186h1v1h-1zM861 222h1v1h-1zM193 103h1v1h-1zM152 102h1v1h-1zM23 230h1v1h-1zM2 673h1v1h-1zM820 106h1v1h-1zM685 181h1v1h-1zM24 607h1v1h-1zM31 663h1v1h-1zM974 103h1v1h-1zM19 540h1v1h-1zM6 313h1v1h-1zM453 109h1v1h-1zM411 184h1v1h-1zM647 175h1v1h-1zM13 227h1v1h-1zM782 102h1v1h-1zM153 104h1v1h-1zM515 430h1v1h-1zM451 109h1v1h-1zM526 487h1v1h-1zM18 665h1v1h-1zM624 99h1v1h-1zM19 551h1v1h-1zM10 740h1v1h-1zM4 801h1v1h-1zM23 410h1v1h-1zM888 179h1v1h-1zM25 302h1v1h-1zM356 100h1v1h-1zM235 110h1v1h-1zM512 508h1v1h-1zM7 785h1v1h-1zM93 99h1v1h-1zM37 739h1v1h-1zM2 665h1v1h-1zM120 5h1v1h-1zM975 173h1v1h-1zM5 152h1v1h-1zM509 616h1v1h-1zM479 6h1v1h-1zM521 624h1v1h-1zM9 144h1v1h-1zM804 185h1v1h-1zM898 107h1v1h-1zM848 6h1v1h-1zM758 109h1v1h-1zM12 730h1v1h-1zM804 105h1v1h-1zM402 2h1v1h-1zM997 89h1v1h-1zM509 686h1v1h-1zM514 431h1v1h-1zM524 312h1v1h-1zM853 168h1v1h-1zM84 221h1v1h-1zM526 744h1v1h-1zM981 169h1v1h-1zM7 713h1v1h-1zM174 222h1v1h-1zM7 454h1v1h-1zM984 109h1v1h-1zM15 615h1v1h-1zM7 335h1v1h-1zM161 184h1v1h-1zM994 68h1v1h-1zM1 557h1v1h-1zM31 584h1v1h-1zM31 532h1v1h-1zM16 580h1v1h-1zM357 221h1v1h-1zM605 222h1v1h-1zM223 185h1v1h-1zM497 108h1v1h-1zM353 105h1v1h-1zM509 381h1v1h-1zM998 329h1v1h-1zM184 7h1v1h-1zM795 0h1v1h-1zM736 181h1v1h-1zM761 107h1v1h-1zM9 638h1v1h-1zM741 107h1v1h-1zM707 100h1v1h-1zM833 162h1v1h-1zM826 167h1v1h-1zM961 173h1v1h-1zM860 108h1v1h-1zM23 680h1v1h-1zM517 548h1v1h-1zM557 101h1v1h-1zM519 610h1v1h-1zM134 186h1v1h-1zM36 373h1v1h-1zM828 180h1v1h-1zM13 433h1v1h-1zM420 2h1v1h-1zM891 221h1v1h-1zM563 106h1v1h-1zM758 1h1v1h-1zM187 104h1v1h-1zM514 462h1v1h-1zM5 540h1v1h-1zM915 162h1v1h-1zM2 292h1v1h-1zM58 183h1v1h-1zM10 644h1v1h-1zM168 221h1v1h-1zM525 840h1v1h-1zM989 40h1v1h-1zM24 403h1v1h-1zM156 104h1v1h-1zM515 352h1v1h-1zM352 112h1v1h-1zM2 817h1v1h-1zM512 678h1v1h-1zM518 767h1v1h-1zM513 314h1v1h-1zM987 176h1v1h-1zM995 40h1v1h-1zM995 163h1v1h-1zM641 182h1v1h-1zM801 108h1v1h-1zM963 165h1v1h-1zM823 2h1v1h-1zM613 3h1v1h-1zM992 37h1v1h-1zM486 4h1v1h-1zM160 185h1v1h-1zM6 266h1v1h-1zM755 99h1v1h-1zM518 808h1v1h-1zM899 106h1v1h-1zM19 628h1v1h-1zM520 611h1v1h-1zM632 2h1v1h-1zM844 176h1v1h-1zM509 745h1v1h-1zM11 717h1v1h-1zM730 7h1v1h-1zM816 162h1v1h-1zM38 343h1v1h-1zM731 222h1v1h-1zM739 171h1v1h-1zM22 522h1v1h-1zM514 309h1v1h-1zM251 108h1v1h-1zM18 766h1v1h-1zM678 169h1v1h-1zM525 234h1v1h-1zM514 612h1v1h-1zM871 178h1v1h-1zM684 170h1v1h-1zM526 439h1v1h-1zM993 144h1v1h-1zM17 796h1v1h-1zM554 112h1v1h-1zM583 184h1v1h-1zM24 430h1v1h-1zM686 179h1v1h-1zM18 701h1v1h-1zM27 292h1v1h-1zM13 531h1v1h-1zM31 257h1v1h-1zM752 160h1v1h-1zM713 109h1v1h-1zM527 782h1v1h-1zM36 231h1v1h-1zM117 184h1v1h-1zM615 112h1v1h-1zM31 6h1v1h-1zM16 829h1v1h-1zM767 0h1v1h-1zM0 748h1v1h-1zM192 104h1v1h-1zM2 99h1v1h-1zM616 99h1v1h-1zM987 109h1v1h-1zM257 183h1v1h-1zM311 221h1v1h-1zM7 509h1v1h-1zM522 259h1v1h-1zM850 1h1v1h-1zM272 104h1v1h-1zM525 822h1v1h-1zM5 434h1v1h-1zM37 672h1v1h-1zM803 103h1v1h-1zM34 735h1v1h-1zM40 630h1v1h-1zM652 3h1v1h-1zM624 183h1v1h-1zM285 221h1v1h-1zM522 463h1v1h-1zM688 162h1v1h-1zM996 331h1v1h-1zM621 124h1v1h-1zM35 312h1v1h-1zM510 641h1v1h-1zM15 494h1v1h-1zM917 172h1v1h-1zM919 3h1v1h-1zM757 102h1v1h-1zM1 514h1v1h-1zM520 581h1v1h-1zM26 315h1v1h-1zM10 561h1v1h-1zM25 776h1v1h-1zM721 169h1v1h-1zM714 107h1v1h-1zM522 520h1v1h-1zM378 99h1v1h-1zM8 356h1v1h-1zM787 222h1v1h-1zM177 5h1v1h-1zM510 555h1v1h-1zM39 532h1v1h-1zM34 635h1v1h-1zM27 308h1v1h-1zM32 766h1v1h-1zM28 283h1v1h-1zM717 222h1v1h-1zM996 264h1v1h-1zM20 521h1v1h-1zM943 2h1v1h-1zM20 770h1v1h-1zM31 110h1v1h-1zM6 782h1v1h-1zM51 102h1v1h-1zM841 174h1v1h-1zM303 222h1v1h-1zM30 743h1v1h-1zM620 110h1v1h-1zM876 172h1v1h-1zM837 170h1v1h-1zM13 751h1v1h-1zM9 507h1v1h-1zM510 460h1v1h-1zM700 109h1v1h-1zM478 222h1v1h-1zM954 174h1v1h-1zM29 606h1v1h-1zM288 185h1v1h-1zM990 57h1v1h-1zM832 107h1v1h-1zM352 106h1v1h-1zM688 110h1v1h-1zM2 521h1v1h-1zM21 704h1v1h-1zM31 528h1v1h-1zM625 221h1v1h-1zM512 6h1v1h-1zM519 291h1v1h-1zM719 177h1v1h-1zM5 748h1v1h-1zM616 182h1v1h-1zM997 93h1v1h-1zM146 2h1v1h-1zM5 768h1v1h-1zM516 609h1v1h-1zM797 2h1v1h-1zM37 534h1v1h-1zM550 100h1v1h-1zM263 106h1v1h-1zM984 139h1v1h-1zM515 740h1v1h-1zM517 2h1v1h-1zM13 334h1v1h-1zM8 441h1v1h-1zM23 705h1v1h-1zM897 109h1v1h-1zM525 559h1v1h-1zM306 6h1v1h-1zM66 102h1v1h-1zM13 3h1v1h-1zM19 726h1v1h-1zM750 185h1v1h-1zM9 497h1v1h-1zM618 150h1v1h-1zM3 473h1v1h-1zM15 694h1v1h-1zM787 110h1v1h-1zM37 491h1v1h-1zM28 487h1v1h-1zM34 825h1v1h-1zM520 440h1v1h-1zM523 502h1v1h-1zM27 100h1v1h-1zM2 771h1v1h-1zM442 106h1v1h-1zM6 620h1v1h-1zM26 830h1v1h-1zM23 806h1v1h-1zM840 165h1v1h-1zM585 111h1v1h-1zM521 360h1v1h-1zM509 563h1v1h-1zM523 105h1v1h-1zM15 533h1v1h-1zM3 673h1v1h-1zM308 221h1v1h-1zM5 516h1v1h-1zM40 388h1v1h-1zM2 293h1v1h-1zM880 182h1v1h-1zM21 393h1v1h-1zM936 110h1v1h-1zM525 482h1v1h-1zM20 558h1v1h-1zM39 760h1v1h-1zM285 221h1v1h-1zM520 510h1v1h-1zM22 752h1v1h-1zM527 487h1v1h-1zM599 108h1v1h-1zM141 111h1v1h-1zM166 108h1v1h-1zM523 693h1v1h-1zM480 107h1v1h-1zM806 3h1v1h-1zM1 546h1v1h-1zM1 653h1v1h-1zM11 497h1v1h-1zM29 422h1v1h-1zM928 3h1v1h-1zM30 570h1v1h-1zM804 173h1v1h-1zM818 164h1v1h-1zM520 610h1v1h-1zM360 104h1v1h-1zM509 361h1v1h-1zM14 696h1v1h-1zM272 6h1v1h-1zM729 166h1v1h-1zM519 299h1v1h-1zM27 575h1v1h-1zM997 446h1v1h-1zM19 661h1v1h-1zM514 610h1v1h-1zM510 589h1v1h-1zM17 705h1v1h-1zM564 0h1v1h-1zM2 52h1v1h-1zM25 528h1v1h-1zM935 101h1v1h-1zM16 680h1v1h-1zM509 4h1v1h-1zM993 93h1v1h-1zM28 610h1v1h-1zM525 380h1v1h-1zM25 693h1v1h-1zM369 186h1v1h-1zM670 106h1v1h-1zM10 143h1v1h-1zM962 106h1v1h-1zM927 168h1v1h-1zM512 336h1v1h-1zM781 160h1v1h-1zM519 290h1v1h-1zM117 111h1v1h-1zM30 818h1v1h-1zM849 100h1v1h-1zM775 110h1v1h-1zM31 359h1v1h-1zM11 558h1v1h-1zM172 109h1v1h-1zM517 557h1v1h-1zM920 99h1v1h-1zM83 101h1v1h-1zM0 728h1v1h-1zM427 100h1v1h-1zM282 221h1v1h-1zM558 107h1v1h-1zM654 173h1v1h-1zM435 221h1v1h-1zM32 288h1v1h-1zM600 104h1v1h-1zM743 99h1v1h-1zM994 13h1v1h-1zM702 169h1v1h-1zM520 700h1v1h-1zM877 5h1v1h-1zM33 682h1v1h-1zM516 735h1v1h-1zM891 3h1v1h-1zM676 4h1v1h-1zM92 100h1v1h-1zM521 406h1v1h-1zM938 167h1v1h-1zM28 541h1v1h-1zM40 454h1v1h-1zM801 166h1v1h-1zM307 1h1v1h-1zM694 175h1v1h-1zM14 678h1v1h-1zM737 221h1v1h-1zM276 2h1v1h-1zM537 7h1v1h-1zM2 235h1v1h-1zM746 160h1v1h-1zM758 165h1v1h-1zM16 458h1v1h-1zM116 111h1v1h-1zM26 296h1v1h-1zM517 517h1v1h-1zM996 170h1v1h-1zM521 685h1v1h-1zM30 440h1v1h-1zM696 6h1v1h-1zM587 183h1v1h-1zM25 706h1v1h-1zM306 3h1v1h-1zM513 693h1v1h-1zM514 736h1v1h-1zM522 406h1v1h-1zM527 417h1v1h-1zM996 842h1v1h-1zM929 186h1v1h-1zM523 641h1v1h-1zM463 102h1v1h-1zM517 229h1v1h-1zM76 184h1v1h-1zM38 659h1v1h-1zM30 611h1v1h-1zM66 184h1v1h-1zM11 553h1v1h-1zM36 232h1v1h-1zM923 108h1v1h-1zM28 521h1v1h-1zM969 4h1v1h-1zM522 186h1v1h-1zM6 109h1v1h-1zM994 126h1v1h-1zM997 352h1v1h-1zM817 107h1v1h-1zM877 170h1v1h-1zM820 185h1v1h-1zM43 109h1v1h-1zM24 691h1v1h-1zM517 479h1v1h-1zM1 586h1v1h-1zM519 340h1v1h-1zM923 107h1v1h-1zM527 341h1v1h-1zM5 686h1v1h-1zM520 695h1v1h-1zM514 262h1v1h-1zM30 587h1v1h-1zM3 678h1v1h-1zM21 714h1v1h-1zM277 101h1v1h-1zM737 222h1v1h-1zM182 109h1v1h-1zM681 5h1v1h-1zM38 575h1v1h-1zM24 828h1v1h-1zM30 487h1v1h-1zM13 818h1v1h-1zM895 108h1v1h-1zM768 162h1v1h-1zM752 176h1v1h-1zM992 135h1v1h-1zM806 164h1v1h-1zM518 548h1v1h-1zM522 660h1v1h-1zM393 102h1v1h-1zM28 654h1v1h-1zM19 550h1v1h-1zM823 102h1v1h-1zM714 181h1v1h-1zM651 99h1v1h-1zM412 104h1v1h-1zM898 107h1v1h-1zM932 164h1v1h-1zM515 771h1v1h-1zM22 549h1v1h-1zM810 101h1v1h-1zM14 717h1v1h-1zM5 333h1v1h-1zM27 444h1v1h-1zM519 318h1v1h-1zM25 412h1v1h-1zM623 116h1v1h-1zM500 112h1v1h-1zM35 756h1v1h-1zM814 103h1v1h-1zM232 107h1v1h-1zM519 375h1v1h-1zM33 427h1v1h-1zM223 109h1v1h-1zM989 31h1v1h-1zM9 836h1v1h-1zM833 161h1v1h-1zM14 793h1v1h-1zM823 178h1v1h-1zM514 235h1v1h-1zM515 102h1v1h-1zM775 109h1v1h-1zM358 0h1v1h-1zM510 541h1v1h-1zM850 5h1v1h-1zM524 823h1v1h-1zM35 522h1v1h-1zM4 36h1v1h-1zM24 552h1v1h-1zM940 110h1v1h-1zM854 165h1v1h-1zM25 447h1v1h-1zM520 280h1v1h-1zM7 657h1v1h-1zM720 3h1v1h-1zM960 185h1v1h-1zM40 402h1v1h-1zM864 168h1v1h-1zM981 108h1v1h-1zM17 700h1v1h-1zM522 484h1v1h-1zM699 177h1v1h-1zM839 7h1v1h-1zM517 659h1v1h-1zM863 160h1v1h-1zM334 184h1v1h-1zM886 104h1v1h-1zM526 599h1v1h-1zM877 105h1v1h-1zM1 136h1v1h-1zM7 504h1v1h-1zM76 6h1v1h-1zM519 276h1v1h-1zM11 319h1v1h-1zM521 576h1v1h-1zM959 109h1v1h-1zM765 177h1v1h-1zM23 550h1v1h-1zM13 360h1v1h-1zM520 499h1v1h-1zM997 239h1v1h-1zM22 609h1v1h-1zM30 780h1v1h-1zM12 520h1v1h-1zM910 167h1v1h-1zM769 2h1v1h-1zM34 317h1v1h-1zM514 317h1v1h-1zM28 183h1v1h-1zM712 104h1v1h-1zM394 103h1v1h-1zM35 479h1v1h-1zM5 221h1v1h-1zM527 810h1v1h-1zM30 626h1v1h-1zM511 398h1v1h-1zM15 620h1v1h-1zM32 687h1v1h-1zM665 161h1v1h-1zM4 51h1v1h-1zM471 4h1v1h-1zM10 322h1v1h-1zM843 4h1v1h-1zM585 99h1v1h-1zM15 572h1v1h-1zM2 402h1v1h-1zM503 185h1v1h-1zM509 683h1v1h-1zM744 170h1v1h-1zM13 483h1v1h-1zM512 830h1v1h-1zM526 786h1v1h-1zM34 321h1v1h-1zM524 597h1v1h-1zM656 104h1v1h-1zM615 186h1v1h-1zM10 144h1v1h-1zM4 544h1v1h-1zM13 615h1v1h-1zM991 120h1v1h-1zM908 6h1v1h-1zM615 108h1v1h-1zM6 194h1v1h-1z"/><path fill="#9a9cae" d="M234 107h1v1h-1zM287 104h1v1h-1zM658 165h1v1h-1zM501 0h1v1h-1zM35 475h1v1h-1zM409 109h1v1h-1zM925 0h1v1h-1zM950 222h1v1h-1zM929 108h1v1h-1zM35 326h1v1h-1zM561 104h1v1h-1zM917 166h1v1h-1zM422 186h1v1h-1zM15 684h1v1h-1zM381 2h1v1h-1zM20 223h1v1h-1zM31 257h1v1h-1zM509 184h1v1h-1zM821 0h1v1h-1zM938 2h1v1h-1zM244 103h1v1h-1zM7 80h1v1h-1zM269 7h1v1h-1zM217 103h1v1h-1zM695 169h1v1h-1zM509 758h1v1h-1zM561 6h1v1h-1zM955 4h1v1h-1zM377 99h1v1h-1zM996 600h1v1h-1zM1 272h1v1h-1zM545 185h1v1h-1zM15 744h1v1h-1zM3 156h1v1h-1zM709 2h1v1h-1zM668 109h1v1h-1zM497 101h1v1h-1zM17 426h1v1h-1zM9 330h1v1h-1zM516 612h1v1h-1zM924 1h1v1h-1zM832 162h1v1h-1zM428 185h1v1h-1zM1 243h1v1h-1zM5 772h1v1h-1zM519 529h1v1h-1zM433 185h1v1h-1zM780 164h1v1h-1zM7 121h1v1h-1zM786 107h1v1h-1zM525 258h1v1h-1zM636 221h1v1h-1zM10 113h1v1h-1zM423 108h1v1h-1zM143 7h1v1h-1zM1 668h1v1h-1zM872 178h1v1h-1zM617 184h1v1h-1zM19 243h1v1h-1zM969 4h1v1h-1zM257 109h1v1h-1zM13 343h1v1h-1zM654 105h1v1h-1zM512 305h1v1h-1zM30 576h1v1h-1zM93 6h1v1h-1zM529 102h1v1h-1zM21 603h1v1h-1zM28 677h1v1h-1zM4 100h1v1h-1zM618 175h1v1h-1zM517 223h1v1h-1zM632 168h1v1h-1zM523 733h1v1h-1zM632 103h1v1h-1zM40 555h1v1h-1zM677 2h1v1h-1zM622 107h1v1h-1zM515 710h1v1h-1zM13 261h1v1h-1zM665 165h1v1h-1zM442 111h1v1h-1zM520 318h1v1h-1zM912 0h1v1h-1zM983 2h1v1h-1zM875 180h1v1h-1zM991 29h1v1h-1zM4 392h1v1h-1zM15 257h1v1h-1zM26 791h1v1h-1zM32 302h1v1h-1zM985 154h1v1h-1zM533 185h1v1h-1zM21 414h1v1h-1zM620 165h1v1h-1zM34 546h1v1h-1zM903 221h1v1h-1zM218 104h1v1h-1zM959 177h1v1h-1zM33 428h1v1h-1zM37 611h1v1h-1zM4 173h1v1h-1zM522 454h1v1h-1zM24 566h1v1h-1zM524 821h1v1h-1zM34 285h1v1h-1zM524 515h1v1h-1zM191 185h1v1h-1zM967 181h1v1h-1zM29 664h1v1h-1zM840 170h1v1h-1zM555 2h1v1h-1zM888 99h1v1h-1zM33 689h1v1h-1zM513 675h1v1h-1zM909 4h1v1h-1zM1 647h1v1h-1zM996 16h1v1h-1zM4 51h1v1h-1zM764 2h1v1h-1zM27 559h1v1h-1zM48 4h1v1h-1zM795 100h1v1h-1zM4 267h1v1h-1zM1 360h1v1h-1zM14 572h1v1h-1zM14 349h1v1h-1zM514 285h1v1h-1zM258 105h1v1h-1zM842 0h1v1h-1zM571 222h1v1h-1zM7 257h1v1h-1zM523 315h1v1h-1zM24 417h1v1h-1zM509 460h1v1h-1zM20 757h1v1h-1zM25 719h1v1h-1zM477 1h1v1h-1zM969 174h1v1h-1zM512 516h1v1h-1zM486 183h1v1h-1zM106 185h1v1h-1zM526 443h1v1h-1zM515 391h1v1h-1zM219 4h1v1h-1zM770 221h1v1h-1zM86 105h1v1h-1zM895 179h1v1h-1zM2 484h1v1h-1zM523 404h1v1h-1zM790 0h1v1h-1zM741 165h1v1h-1zM16 597h1v1h-1zM402 111h1v1h-1zM622 172h1v1h-1zM305 185h1v1h-1zM510 645h1v1h-1zM518 542h1v1h-1zM526 546h1v1h-1zM754 4h1v1h-1zM19 762h1v1h-1zM996 108h1v1h-1zM40 222h1v1h-1zM348 185h1v1h-1zM789 167h1v1h-1zM28 500h1v1h-1zM870 186h1v1h-1zM37 310h1v1h-1zM297 221h1v1h-1zM517 225h1v1h-1zM240 1h1v1h-1zM394 99h1v1h-1zM624 2h1v1h-1zM313 1h1v1h-1zM8 202h1v1h-1zM15 742h1v1h-1zM826 222h1v1h-1zM914 162h1v1h-1zM816 177h1v1h-1zM993 130h1v1h-1zM459 185h1v1h-1zM994 45h1v1h-1zM8 418h1v1h-1zM9 815h1v1h-1zM13 321h1v1h-1zM308 221h1v1h-1zM10 841h1v1h-1zM845 185h1v1h-1zM524 748h1v1h-1zM511 827h1v1h-1zM36 300h1v1h-1zM17 483h1v1h-1zM18 186h1v1h-1zM26 573h1v1h-1zM25 754h1v1h-1zM751 99h1v1h-1zM990 36h1v1h-1zM8 565h1v1h-1zM605 221h1v1h-1zM35 732h1v1h-1zM522 415h1v1h-1zM712 170h1v1h-1zM523 445h1v1h-1zM28 762h1v1h-1zM57 99h1v1h-1zM26 795h1v1h-1zM998 450h1v1h-1zM607 183h1v1h-1zM22 453h1v1h-1zM128 2h1v1h-1zM173 1h1v1h-1zM520 408h1v1h-1zM717 186h1v1h-1zM29 382h1v1h-1zM514 679h1v1h-1zM998 236h1v1h-1zM369 101h1v1h-1zM903 0h1v1h-1zM879 102h1v1h-1zM513 605h1v1h-1zM25 580h1v1h-1zM734 174h1v1h-1zM270 111h1v1h-1zM35 572h1v1h-1zM8 682h1v1h-1zM772 7h1v1h-1zM513 463h1v1h-1zM996 256h1v1h-1z"/><path fill="#e8e8f0" d="M173 111h1v1h-1zM37 104h1v1h-1zM15 673h1v1h-1zM307 111h1v1h-1zM437 4h1v1h-1zM891 105h1v1h-1zM448 183h1v1h-1zM517 573h1v1h-1zM950 175h1v1h-1zM28 679h1v1h-1zM828 166h1v1h-1zM35 552h1v1h-1zM35 381h1v1h-1zM871 5h1v1h-1zM13 782h1v1h-1zM371 221h1v1h-1zM3 405h1v1h-1zM519 495h1v1h-1zM10 332h1v1h-1zM990 130h1v1h-1zM996 831h1v1h-1zM993 138h1v1h-1zM712 177h1v1h-1zM520 827h1v1h-1zM38 704h1v1h-1zM78 101h1v1h-1zM33 533h1v1h-1zM132 109h1v1h-1zM509 816h1v1h-1zM3 344h1v1h-1zM764 185h1v1h-1zM13 274h1v1h-1z"/><circle cx="8.2" cy="168.8" r="1.1" fill="#fff" fill-opacity="0.85"/><circle cx="200.2" cy="7.4" r="1.1" fill="#fff" fill-opacity="0.85"/><circle cx="710.3" cy="171.3" r="1.1" fill="#fff" fill-opacity="0.85"/><circle cx="13.8" cy="601.2" r="1.1" fill="#fff" fill-opacity="0.85"/><circle cx="25.7" cy="383.9" r="1.1" fill="#fff" fill-opacity="0.85"/><circle cx="54.4" cy="181.4" r="1.1" fill="#fff" fill-opacity="0.85"/><circle cx="630.8" cy="178.3" r="1.1" fill="#fff" fill-opacity="0.85"/><circle cx="736.8" cy="105.1" r="1.1" fill="#fff" fill-opacity="0.85"/><circle cx="782.0" cy="171.3" r="1.1" fill="#fff" fill-opacity="0.85"/><circle cx="520.8" cy="606.8" r="1.1" fill="#fff" fill-opacity="0.85"/><circle cx="988.3" cy="160.9" r="1.1" fill="#fff" fill-opacity="0.85"/><circle cx="524.9" cy="760.6" r="1.1" fill="#fff" fill-opacity="0.85"/><circle cx="25.4" cy="430.4" r="1.1" fill="#fff" fill-opacity="0.85"/><circle cx="20.3" cy="817.0" r="1.1" fill="#fff" fill-opacity="0.85"/><circle cx="7.3" cy="505.8" r="1.1" fill="#fff" fill-opacity="0.85"/><circle cx="526.0" cy="735.9" r="1.1" fill="#fff" fill-opacity="0.85"/><circle cx="680.4" cy="181.4" r="1.1" fill="#fff" fill-opacity="0.85"/><circle cx="513.0" cy="517.8" r="1.1" fill="#fff" fill-opacity="0.85"/><circle cx="28.7" cy="618.6" r="1.1" fill="#fff" fill-opacity="0.85"/><circle cx="21.9" cy="366.7" r="1.1" fill="#fff" fill-opacity="0.85"/><circle cx="656.1" cy="220.2" r="1.1" fill="#fff" fill-opacity="0.85"/><circle cx="998.1" cy="718.6" r="1.1" fill="#fff" fill-opacity="0.85"/><circle cx="365.3" cy="106.3" r="1.1" fill="#fff" fill-opacity="0.85"/><circle cx="895.5" cy="843.9" r="1.1" fill="#fff" fill-opacity="0.85"/><circle cx="33.3" cy="782.2" r="1.1" fill="#fff" fill-opacity="0.85"/><circle cx="12.6" cy="483.4" r="1.1" fill="#fff" fill-opacity="0.85"/><circle cx="48.2" cy="221.3" r="1.1" fill="#fff" fill-opacity="0.85"/><circle cx="70.2" cy="101.5" r="1.1" fill="#fff" fill-opacity="0.85"/><circle cx="442.5" cy="3.6" r="1.1" fill="#fff" fill-opacity="0.85"/><circle cx="860.9" cy="220.5" r="1.1" fill="#fff" fill-opacity="0.85"/><circle cx="311.4" cy="108.0" r="1.1" fill="#fff" fill-opacity="0.85"/><circle cx="993.8" cy="122.8" r="1.1" fill="#fff" fill-opacity="0.85"/><circle cx="834.4" cy="178.9" r="1.1" fill="#fff" fill-opacity="0.85"/><circle cx="543.4" cy="843.6" r="1.1" fill="#fff" fill-opacity="0.85"/><circle cx="672.1" cy="174.7" r="1.1" fill="#fff" fill-opacity="0.85"/><circle cx="527.1" cy="698.4" r="1.1" fill="#fff" fill-opacity="0.85"/><circle cx="982.3" cy="127.2" r="1.1" fill="#fff" fill-opacity="0.85"/><circle cx="662.5" cy="110.6" r="1.1" fill="#fff" fill-opacity="0.85"/><circle cx="163.4" cy="843.1" r="1.1" fill="#fff" fill-opacity="0.85"/><circle cx="36.8" cy="3.8" r="1.1" fill="#fff" fill-opacity="0.85"/></svg>
<div class="a" style="left:7px;top:7px;width:981px;height:92px;background:#000;box-shadow:0 0 3px 1px #000"></div>
<div class="a" style="left:0;top:0;width:999px;height:2px;background:#8898e8"></div>
<svg class="a" style="left:0;top:0" width="160" height="50" viewBox="0 0 160 50">
<defs><linearGradient id="lg" x1="14" y1="0" x2="147" y2="0" gradientUnits="userSpaceOnUse"><stop offset="0" stop-color="#4c4cf8"/><stop offset="0.5" stop-color="#8a5ef2"/><stop offset="1" stop-color="#c672e6"/></linearGradient></defs>
<g fill="none" stroke="url(#lg)" stroke-width="3.4">
<path d="M35.2,14.6 L20,14.6 Q16.6,14.6 16.6,18.2 Q16.6,21.4 19.6,22.8 L33.6,28.8 Q36.2,30 36.2,33.4 L36.2,39.9 L14.2,39.9"/>
<path d="M42.2,41.6 L42.2,21.5"/>
<path d="M49.5,24.7 L55.5,24.7 Q58.1,24.7 58.1,27.5 L58.1,41.6 M58.1,39.9 L52.5,39.9 Q49.8,39.9 49.8,36.5 Q49.8,33.2 52.5,31.6 L55.5,29.8"/>
<path d="M65.4,41.6 L65.4,23.2 M65.4,24.7 L69.8,24.7 Q72,24.7 72,27.5"/>
<path d="M77.6,41.6 L77.6,12.8 M77.6,14.6 L92,14.6 M79,25.4 L88,25.4"/>
<ellipse cx="98.1" cy="32.1" rx="6.3" ry="8.2"/>
<path d="M110.9,41.6 L110.9,23.2 M110.9,25 L115,25 Q117.2,25 117.2,27.5"/>
<path d="M130.2,23.8 L125.5,23.8 Q120.3,23.8 120.3,32 Q120.3,40.3 125.5,40.3 L130.2,40.3"/>
<path d="M146.2,23.8 L140.5,23.8 Q135,23.8 135,32 Q135,40.3 140.5,40.3 L145.8,40.3 M145.5,24.5 L140.2,35.8"/>
</g>
<g fill="url(#lg)"><polygon points="40.5,22 42.3,19.2 44,22"/><polygon points="38.2,27 45.8,23.2 45.8,26.6 43,27.4"/></g>
</svg>

<div class="btn" style="left:37px;top:54px;width:83px;height:26px;line-height:26px;font-size:12px;letter-spacing:-0.3px">End Turn</div>
<div class="a" style="left:37px;top:85px;font-size:12.1px;color:#e6e64a;text-decoration:underline">Return to Lobby</div>
<div class="box" style="left:160px;top:7px;width:605px;height:90px"></div>
<div class="a" style="left:168px;top:20px;font-size:12.4px;white-space:nowrap">Alpha Test Two</div>
<div class="a" style="left:415px;top:20px;font-size:11.7px">PRIVATE</div>
<div class="a" style="left:512px;top:20px;font-size:12.4px">Turn: 69</div>
<div class="a" style="left:636px;top:20px;font-size:12.4px">30:49:02</div>
<div class="a" style="left:168px;top:55px;font-size:12.5px;line-height:15px;white-space:nowrap"><span class="g">SFC (steamgirlirene)</span>, Earth (steamgirlirene), <span class="g">Atakcia (tomtomhotep)</span>, <span class="g">ExoFaun (tomtomhotep)</span>,<br>Consortium (tomtomhotep)</div>
<div class="btn" style="left:827px;top:25px;width:103px;height:25px;line-height:26px;font-size:11.7px">Leave Game</div>
<div class="btn" style="left:807px;top:54px;width:146px;height:25px;line-height:26px;font-size:11.7px">Save Game and Quit</div>
<div class="box" style="left:12px;top:114px;width:604px;height:66px"></div>
<div class="a" style="left:26px;top:129px;font-size:12.3px;white-space:nowrap">governmental support</div>
<div class="a" style="left:161px;top:129px;font-size:12.3px;white-space:nowrap">26879</div>
<div class="a" style="left:26px;top:152px;font-size:12.3px;white-space:nowrap">economic power</div>
<div class="a" style="left:155px;top:152px;font-size:12.3px;white-space:nowrap">13548<span style="color:#707088">1</span></div>
<div class="a" style="left:222px;top:129px;font-size:12.5px;white-space:nowrap">scientific resources</div>
<div class="a" style="left:337px;top:129px;font-size:12.3px;white-space:nowrap">35492</div>
<div class="a" style="left:222px;top:152px;font-size:12.5px;white-space:nowrap">tactical resources</div>
<div class="a" style="left:337px;top:152px;font-size:12.3px;white-space:nowrap">39900</div>
<div class="a g" style="left:419px;top:140px;font-size:12.7px;white-space:nowrap">business relationship</div>
<div class="a g" style="left:547px;top:140px;font-size:12.3px;white-space:nowrap">445224</div>
<div class="a" style="left:626px;top:111px;width:354px;height:46px;background:#000;box-shadow:0 0 3px 1px #000"></div>
<div class="a" style="left:632px;top:119px;width:345px;height:31px;background:#333333;border:1px solid #d8d820"></div>
<div class="a" style="left:638px;top:125px;font-size:15.5px;color:#e8e830">Chat Window</div>
<div class="a" style="left:921px;top:129px;width:0;height:0;border-left:6px solid transparent;border-right:6px solid transparent;border-bottom:10px solid #f0f000"></div>
<div class="a" style="left:10px;top:188px;width:985px;height:31px;background:#000033;border:1px solid #38b8c8"></div>
<div class="a" style="left:0;top:192px;width:1003px;text-align:center;font-size:19.2px;font-weight:bold;color:#f0f020">Atakcian Mining Consortium</div>
<svg class="a" style="left:19px;top:275.5px" width="13" height="14"><rect x="0" y="0" width="12" height="2" fill="#f0f000"/><polygon points="6,2.5 12,13.2 0,13.2" fill="#f0f000"/></svg>
<svg class="a" style="left:19px;top:314px" width="13" height="30"><polygon points="6,0 12,9.5 8,9.5 8,19.5 12,19.5 6,29 0,19.5 4,19.5 4,9.5 0,9.5" fill="#f0f000"/></svg>
<div class="a" style="left:42px;top:224px;width:442px;height:618px;background:#000;border-left:1px solid #fff;border-right:1px solid #fff;overflow:hidden">
<div class="card" style="left:8px;top:2px;height:167px">
<div class="loc" style="opacity:0.12;"><svg width="100" height="150" style="position:absolute;left:0;top:0"><defs><pattern id="pv0" patternUnits="userSpaceOnUse" x="3.6" y="0" width="8.4" height="5"><rect width="8.4" height="5" fill="#8cf59a"/><path fill="#0a7e22" d="M0,0.4 L4,3.2 L4,6.6 L0,3.8 Z M0,-4.6 L4,-1.8 L4,1.6 L0,-1.2 Z M8.4,0.4 L4.6,3.2 L4.6,6.6 L8.4,3.8 Z M8.4,-4.6 L4.6,-1.8 L4.6,1.6 L8.4,-1.2 Z"/></pattern><pattern id="ph0" patternUnits="userSpaceOnUse" x="0" y="3.6" width="5" height="8.4"><rect width="5" height="8.4" fill="#8cf59a"/><path fill="#0a7e22" d="M0.4,0 L3.2,4 L6.6,4 L3.8,0 Z M-4.6,0 L-1.8,4 L1.6,4 L-1.2,0 Z M0.4,8.4 L3.2,4.6 L6.6,4.6 L3.8,8.4 Z M-4.6,8.4 L-1.8,4.6 L1.6,4.6 L-1.2,8.4 Z"/></pattern></defs><rect x="0" y="0" width="100" height="150" rx="10" fill="#22e838"/><rect x="3.6" y="3.6" width="92.8" height="142.8" rx="6.5" fill="url(#pv0)"/><rect x="12" y="3.6" width="76" height="8.4" fill="url(#ph0)"/><rect x="12" y="138" width="76" height="8.4" fill="url(#ph0)"/><rect x="12" y="12" width="76" height="126" fill="#fff"/><g fill="none" stroke="#3a3a3a" stroke-width="1.5" stroke-linejoin="round" stroke-linecap="round" transform="translate(0,1)"><path d="M40.2,43.1 Q60,36.5 82.8,42.7 Q64,55.5 42.4,60.2 Z" fill="#fff"/><path d="M37,44.2 L40.2,43.1 L42.4,60.2 L39.2,61 Z" fill="#fff"/><path d="M31.5,42 L34.5,39 L41.5,38.8 L40.2,43.1 L37,44.2 Z" fill="#fff"/><path d="M39,61 L45.8,61 Q43,65.5 36.4,66.6 Z" fill="#fff"/><path d="M16.2,55.6 Q27,55 34.6,49.3 Q29.5,53.5 28.2,57.3 Q31.8,57.6 34.6,59.3 Q26,63.5 16.2,55.6 Z" fill="#fff"/><circle cx="55.4" cy="48.4" r="3.7"/><circle cx="66" cy="46.5" r="3.5"/></g><text x="50.5" y="104.5" text-anchor="middle" font-family="Liberation Sans" font-size="13.7" fill="#111">Location</text></svg></div>
<div class="info"><div class="t">MO2-683</div>planetary infrastructure: <b>210</b><br>civilization development: <b>6 (agrarian)</b><br>defensive strength: <b>12</b><br>diplomatic affinity for Earth: <b>7</b><br>diplomatic affinity for Atakcia: <b>16</b><br>Luminite deposits: <b>7000</b><br><span class="r">Mining Operations: None</span><br><span class="r">Civilization Status: Safe</span></div>
</div>
<div class="card" style="left:8px;top:172px;height:168px">
<div class="loc" style=""><svg width="100" height="150" style="position:absolute;left:0;top:0"><defs><pattern id="pv1" patternUnits="userSpaceOnUse" x="3.6" y="0" width="8.4" height="5"><rect width="8.4" height="5" fill="#8cf59a"/><path fill="#0a7e22" d="M0,0.4 L4,3.2 L4,6.6 L0,3.8 Z M0,-4.6 L4,-1.8 L4,1.6 L0,-1.2 Z M8.4,0.4 L4.6,3.2 L4.6,6.6 L8.4,3.8 Z M8.4,-4.6 L4.6,-1.8 L4.6,1.6 L8.4,-1.2 Z"/></pattern><pattern id="ph1" patternUnits="userSpaceOnUse" x="0" y="3.6" width="5" height="8.4"><rect width="5" height="8.4" fill="#8cf59a"/><path fill="#0a7e22" d="M0.4,0 L3.2,4 L6.6,4 L3.8,0 Z M-4.6,0 L-1.8,4 L1.6,4 L-1.2,0 Z M0.4,8.4 L3.2,4.6 L6.6,4.6 L3.8,8.4 Z M-4.6,8.4 L-1.8,4.6 L1.6,4.6 L-1.2,8.4 Z"/></pattern></defs><rect x="0" y="0" width="100" height="150" rx="10" fill="#22e838"/><rect x="3.6" y="3.6" width="92.8" height="142.8" rx="6.5" fill="url(#pv1)"/><rect x="12" y="3.6" width="76" height="8.4" fill="url(#ph1)"/><rect x="12" y="138" width="76" height="8.4" fill="url(#ph1)"/><rect x="12" y="12" width="76" height="126" fill="#fff"/><g fill="none" stroke="#3a3a3a" stroke-width="1.5" stroke-linejoin="round" stroke-linecap="round" transform="translate(0,1)"><path d="M40.2,43.1 Q60,36.5 82.8,42.7 Q64,55.5 42.4,60.2 Z" fill="#fff"/><path d="M37,44.2 L40.2,43.1 L42.4,60.2 L39.2,61 Z" fill="#fff"/><path d="M31.5,42 L34.5,39 L41.5,38.8 L40.2,43.1 L37,44.2 Z" fill="#fff"/><path d="M39,61 L45.8,61 Q43,65.5 36.4,66.6 Z" fill="#fff"/><path d="M16.2,55.6 Q27,55 34.6,49.3 Q29.5,53.5 28.2,57.3 Q31.8,57.6 34.6,59.3 Q26,63.5 16.2,55.6 Z" fill="#fff"/><circle cx="55.4" cy="48.4" r="3.7"/><circle cx="66" cy="46.5" r="3.5"/></g><text x="50.5" y="104.5" text-anchor="middle" font-family="Liberation Sans" font-size="13.7" fill="#111">Location</text></svg></div>
<div class="info"><div class="t">MP5-072</div>planetary infrastructure: <b>160</b><br>civilization development: <b>8 (agrarian)</b><br>defensive strength: <b>10</b><br>diplomatic affinity for Earth: <b>11</b><br>diplomatic affinity for Atakcia: <b>1</b><br>Luminite deposits: <b>3000</b><br><span class="r">Mining Operations: None</span><br><span class="r">Civilization Status: Safe</span></div>
</div>
<div class="card" style="left:8px;top:343px;height:168px">
<div class="loc" style=""><svg width="100" height="150" style="position:absolute;left:0;top:0"><defs><pattern id="pv2" patternUnits="userSpaceOnUse" x="3.6" y="0" width="8.4" height="5"><rect width="8.4" height="5" fill="#8cf59a"/><path fill="#0a7e22" d="M0,0.4 L4,3.2 L4,6.6 L0,3.8 Z M0,-4.6 L4,-1.8 L4,1.6 L0,-1.2 Z M8.4,0.4 L4.6,3.2 L4.6,6.6 L8.4,3.8 Z M8.4,-4.6 L4.6,-1.8 L4.6,1.6 L8.4,-1.2 Z"/></pattern><pattern id="ph2" patternUnits="userSpaceOnUse" x="0" y="3.6" width="5" height="8.4"><rect width="5" height="8.4" fill="#8cf59a"/><path fill="#0a7e22" d="M0.4,0 L3.2,4 L6.6,4 L3.8,0 Z M-4.6,0 L-1.8,4 L1.6,4 L-1.2,0 Z M0.4,8.4 L3.2,4.6 L6.6,4.6 L3.8,8.4 Z M-4.6,8.4 L-1.8,4.6 L1.6,4.6 L-1.2,8.4 Z"/></pattern></defs><rect x="0" y="0" width="100" height="150" rx="10" fill="#22e838"/><rect x="3.6" y="3.6" width="92.8" height="142.8" rx="6.5" fill="url(#pv2)"/><rect x="12" y="3.6" width="76" height="8.4" fill="url(#ph2)"/><rect x="12" y="138" width="76" height="8.4" fill="url(#ph2)"/><rect x="12" y="12" width="76" height="126" fill="#fff"/><g fill="none" stroke="#3a3a3a" stroke-width="1.5" stroke-linejoin="round" stroke-linecap="round" transform="translate(0,1)"><path d="M40.2,43.1 Q60,36.5 82.8,42.7 Q64,55.5 42.4,60.2 Z" fill="#fff"/><path d="M37,44.2 L40.2,43.1 L42.4,60.2 L39.2,61 Z" fill="#fff"/><path d="M31.5,42 L34.5,39 L41.5,38.8 L40.2,43.1 L37,44.2 Z" fill="#fff"/><path d="M39,61 L45.8,61 Q43,65.5 36.4,66.6 Z" fill="#fff"/><path d="M16.2,55.6 Q27,55 34.6,49.3 Q29.5,53.5 28.2,57.3 Q31.8,57.6 34.6,59.3 Q26,63.5 16.2,55.6 Z" fill="#fff"/><circle cx="55.4" cy="48.4" r="3.7"/><circle cx="66" cy="46.5" r="3.5"/></g><text x="50.5" y="104.5" text-anchor="middle" font-family="Liberation Sans" font-size="13.7" fill="#111">Location</text></svg></div>
<div class="info"><div class="t">MU3-248</div>planetary infrastructure: <b>300</b><br>civilization development: <b>13 (modern)</b><br>defensive strength: <b>17</b><br>diplomatic affinity for Earth: <b>11</b><br>diplomatic affinity for Atakcia: <b>2</b><br>Luminite deposits: <b>15000</b><br><span class="r">Mining Operations: None</span><br><span class="r">Civilization Status: Safe</span></div>
</div>
<div class="card" style="left:8px;top:514px;height:168px">
<div class="loc" style=""><svg width="100" height="150" style="position:absolute;left:0;top:0"><defs><pattern id="pv3" patternUnits="userSpaceOnUse" x="3.6" y="0" width="8.4" height="5"><rect width="8.4" height="5" fill="#8cf59a"/><path fill="#0a7e22" d="M0,0.4 L4,3.2 L4,6.6 L0,3.8 Z M0,-4.6 L4,-1.8 L4,1.6 L0,-1.2 Z M8.4,0.4 L4.6,3.2 L4.6,6.6 L8.4,3.8 Z M8.4,-4.6 L4.6,-1.8 L4.6,1.6 L8.4,-1.2 Z"/></pattern><pattern id="ph3" patternUnits="userSpaceOnUse" x="0" y="3.6" width="5" height="8.4"><rect width="5" height="8.4" fill="#8cf59a"/><path fill="#0a7e22" d="M0.4,0 L3.2,4 L6.6,4 L3.8,0 Z M-4.6,0 L-1.8,4 L1.6,4 L-1.2,0 Z M0.4,8.4 L3.2,4.6 L6.6,4.6 L3.8,8.4 Z M-4.6,8.4 L-1.8,4.6 L1.6,4.6 L-1.2,8.4 Z"/></pattern></defs><rect x="0" y="0" width="100" height="150" rx="10" fill="#22e838"/><rect x="3.6" y="3.6" width="92.8" height="142.8" rx="6.5" fill="url(#pv3)"/><rect x="12" y="3.6" width="76" height="8.4" fill="url(#ph3)"/><rect x="12" y="138" width="76" height="8.4" fill="url(#ph3)"/><rect x="12" y="12" width="76" height="126" fill="#fff"/><g fill="none" stroke="#3a3a3a" stroke-width="1.5" stroke-linejoin="round" stroke-linecap="round" transform="translate(0,1)"><path d="M40.2,43.1 Q60,36.5 82.8,42.7 Q64,55.5 42.4,60.2 Z" fill="#fff"/><path d="M37,44.2 L40.2,43.1 L42.4,60.2 L39.2,61 Z" fill="#fff"/><path d="M31.5,42 L34.5,39 L41.5,38.8 L40.2,43.1 L37,44.2 Z" fill="#fff"/><path d="M39,61 L45.8,61 Q43,65.5 36.4,66.6 Z" fill="#fff"/><path d="M16.2,55.6 Q27,55 34.6,49.3 Q29.5,53.5 28.2,57.3 Q31.8,57.6 34.6,59.3 Q26,63.5 16.2,55.6 Z" fill="#fff"/><circle cx="55.4" cy="48.4" r="3.7"/><circle cx="66" cy="46.5" r="3.5"/></g><text x="50.5" y="104.5" text-anchor="middle" font-family="Liberation Sans" font-size="13.7" fill="#111">Location</text></svg></div>
<div class="info"><div class="t">NF3-853</div>planetary infrastructure: <b>280</b><br>civilization development: <b>10 (industrial)</b><br>defensive strength: <b>9</b><br>diplomatic affinity for Earth: <b>11</b><br>diplomatic affinity for Atakcia: <b>17</b><br>Luminite deposits: <b>?</b><br><span class="r">Mining Operations: None</span><br><span class="r">Civilization Status: Safe</span></div>
</div>
</div>
<svg class="a" style="left:486px;top:224px" width="21" height="618"><defs><linearGradient id="trL" x1="0" x2="1" y1="0" y2="0"><stop offset="0" stop-color="#efeee8"/><stop offset="0.6" stop-color="#fcfcf8"/><stop offset="1" stop-color="#fdfdf9"/></linearGradient><linearGradient id="btL" x1="0" x2="1" y1="0" y2="1"><stop offset="0" stop-color="#d9e4fd"/><stop offset="1" stop-color="#b9cdfa"/></linearGradient></defs><rect x="0" y="0" width="21" height="618" fill="url(#trL)"/><rect x="0.5" y="0.5" width="20" height="617" fill="none" stroke="#fff"/><rect x="2" y="2" width="17" height="19" rx="2" fill="#a9bbdf"/><rect x="1.5" y="1.5" width="18" height="18" rx="2" fill="url(#btL)" stroke="#f4f7fe"/><polyline points="6.5,13 10.5,9 14.5,13" fill="none" stroke="#4d6185" stroke-width="2"/><rect x="2" y="598" width="17" height="19" rx="2" fill="#a9bbdf"/><rect x="1.5" y="597.5" width="18" height="18" rx="2" fill="url(#btL)" stroke="#f4f7fe"/><polyline points="6.5,605 10.5,609 14.5,605" fill="none" stroke="#4d6185" stroke-width="2"/><rect x="2" y="103.5" width="17" height="19" rx="2" fill="#a9bbdf"/><rect x="1.5" y="103.0" width="18" height="18" rx="2" fill="url(#btL)" stroke="#f4f7fe"/><line x1="7.5" y1="109.5" x2="13.5" y2="109.5" stroke="#8faaee" stroke-width="1"/><line x1="7.5" y1="111.5" x2="13.5" y2="111.5" stroke="#8faaee" stroke-width="1"/><line x1="7.5" y1="113.5" x2="13.5" y2="113.5" stroke="#8faaee" stroke-width="1"/><line x1="7.5" y1="115.5" x2="13.5" y2="115.5" stroke="#8faaee" stroke-width="1"/></svg>
<div class="a" style="left:529px;top:224px;width:442px;height:31px;background:#333333;border:1px solid #d8d840"></div>
<div class="a" style="left:535px;top:231px;font-size:15.8px;color:#e4e438">Available Missions</div>
<div class="a" style="left:901px;top:234px;width:0;height:0;border-left:6px solid transparent;border-right:6px solid transparent;border-top:10px solid #f0f000"></div>
<div class="a" style="left:529px;top:257px;width:442px;height:590px;background:#000;border:1px solid #fff;overflow:hidden">
<div class="a" style="left:8px;top:6px;width:424px;height:19px;background:#000040;border:1px solid #8a8a8a"></div>
<div class="a" style="left:10px;top:9px;font-size:12.6px;color:#e6e630;text-decoration:underline;white-space:nowrap">Show un-doable missions</div>
</div>
<div class="a" style="left:530px;top:258px;width:440px;height:584px;overflow:hidden">
<div class="mc" style="left:8px;top:28px">
<div class="oval"><svg width="100" height="150" style="position:absolute;left:0;top:0"><ellipse cx="49.5" cy="74.5" rx="49.5" ry="74.5" fill="#686868"/><ellipse cx="49.5" cy="74.5" rx="45" ry="70" fill="#f4f4f4"/><ellipse cx="49.5" cy="74.5" rx="42.6" ry="67.6" fill="none" stroke="#4a4a4a" stroke-width="3" stroke-dasharray="5.2 1.9"/><ellipse cx="49.5" cy="74.5" rx="38.7" ry="63.7" fill="none" stroke="#4a4a4a" stroke-width="3" stroke-dasharray="5.2 1.9" stroke-dashoffset="3.4"/><ellipse cx="49.5" cy="74.5" rx="36.4" ry="61.4" fill="#fff"/><g stroke="#a89420" stroke-width="1.25" stroke-linejoin="round"><path d="M33.3,51.5 L40.4,40.8 L58.6,39.5 L65.1,52.2 L61,57.5 L57,64.5 L53,67.8 L48.5,67.2 L35.5,53.5 Z" fill="#e6eea4"/><path d="M40.4,40.8 L47.6,41.4 L58.6,39.5 L63.8,51.5 L50.5,47.3 Q48.5,53.8 45.2,52.2 Q43.4,50.8 44.2,47.2 L46.3,41.8" fill="#e0d4a4"/><path d="M31,33.6 L22.9,46.3 L33.3,51.5 L40.4,40.8 Z" fill="#dccca6"/><path d="M67.7,33.3 L75.6,45.7 L65.1,52.2 L58.6,39.5 Z" fill="#dccca6"/><rect x="33.5" y="50.5" width="7.5" height="4.6" rx="2.3" transform="rotate(38 37.2 52.8)" fill="#e4f098"/><rect x="36.5" y="54.3" width="8" height="4.6" rx="2.3" transform="rotate(38 40.5 56.6)" fill="#e4f098"/><rect x="40" y="58" width="8" height="4.6" rx="2.3" transform="rotate(38 44 60.3)" fill="#e4f098"/><rect x="43.5" y="61.6" width="8" height="4.6" rx="2.3" transform="rotate(38 47.5 63.9)" fill="#e4f098"/></g><text x="49.5" y="89.9" text-anchor="middle" font-family="Liberation Sans" font-size="12" fill="#111">Diplomatic</text><text x="49.5" y="103.9" text-anchor="middle" font-family="Liberation Sans" font-size="12" fill="#111">Mission</text></svg></div>
<div class="mt">Establish Diplomatic Ties with United<br>Earth Government</div><div class="hrs">2 hrs.</div><div class="lo">Location: <b>Earth or Atakcia</b></div><div class="rq">Requirements:</div><div class="rqs">Requires: 50 governmental support</div><div class="more">more<span class="tri"></span></div>
</div>
<div class="mc" style="left:8px;top:205px">
<div class="oval"><svg width="100" height="150" style="position:absolute;left:0;top:0"><ellipse cx="49.5" cy="74.5" rx="49.5" ry="74.5" fill="#686868"/><ellipse cx="49.5" cy="74.5" rx="45" ry="70" fill="#f4f4f4"/><ellipse cx="49.5" cy="74.5" rx="42.6" ry="67.6" fill="none" stroke="#4a4a4a" stroke-width="3" stroke-dasharray="5.2 1.9"/><ellipse cx="49.5" cy="74.5" rx="38.7" ry="63.7" fill="none" stroke="#4a4a4a" stroke-width="3" stroke-dasharray="5.2 1.9" stroke-dashoffset="3.4"/><ellipse cx="49.5" cy="74.5" rx="36.4" ry="61.4" fill="#fff"/><g><rect x="36.9" y="24.6" width="23.9" height="28" rx="2.2" fill="#9a4e12"/><rect x="38.2" y="25.8" width="21.3" height="25.6" rx="1.2" fill="#c8782c"/><rect x="40" y="27" width="17.9" height="22.7" fill="#fdfdfd"/><rect x="41.1" y="23.3" width="16" height="3.9" fill="#9c9c9c"/><path d="M42,31 H56 M42,34.6 H56 M42,38.6 H56 M42,42.7 H46.5 M42,46.8 H46.5" stroke="#505060" stroke-width="1.1"/><circle cx="52.9" cy="44.4" r="3.8" fill="#d33a48"/><circle cx="52.9" cy="44.4" r="1.3" fill="#fff"/></g><text x="49.5" y="77.4" text-anchor="middle" font-family="Liberation Sans" font-size="12" fill="#111">Beaurocratic</text><text x="49.5" y="91.4" text-anchor="middle" font-family="Liberation Sans" font-size="12" fill="#111">Mission</text></svg></div>
<div class="mt">Strengthen Communication Channels<br>with Atakcian Government</div><div class="hrs">2 hrs.</div><div class="lo">Location: <b>Atakcia</b></div><div class="rq">Requirements:</div><div class="rqs">Requires: 50 governmental support</div><div class="more">more<span class="tri"></span></div>
</div>
<div class="mc" style="left:8px;top:382px">
<div class="oval"><svg width="100" height="150" style="position:absolute;left:0;top:0"><ellipse cx="49.5" cy="74.5" rx="49.5" ry="74.5" fill="#686868"/><ellipse cx="49.5" cy="74.5" rx="45" ry="70" fill="#f4f4f4"/><ellipse cx="49.5" cy="74.5" rx="42.6" ry="67.6" fill="none" stroke="#4a4a4a" stroke-width="3" stroke-dasharray="5.2 1.9"/><ellipse cx="49.5" cy="74.5" rx="38.7" ry="63.7" fill="none" stroke="#4a4a4a" stroke-width="3" stroke-dasharray="5.2 1.9" stroke-dashoffset="3.4"/><ellipse cx="49.5" cy="74.5" rx="36.4" ry="61.4" fill="#fff"/><g stroke="#76603a" stroke-width="1"><rect x="34.5" y="33.8" width="12.8" height="22.9" rx="6.4" fill="#d8ae22"/><rect x="52" y="33.8" width="12.8" height="22.3" rx="6.4" fill="#e2b41c"/><rect x="43.8" y="38" width="14.1" height="24" rx="7" fill="#d6ab26"/><ellipse cx="50.8" cy="43" rx="5" ry="3.2" fill="#f0d060" stroke="none"/><ellipse cx="40.8" cy="38.5" rx="4.5" ry="3" fill="#ecc850" stroke="none"/></g><text x="49.5" y="82.2" text-anchor="middle" font-family="Liberation Sans" font-size="12" fill="#111">Economic</text><text x="49.5" y="96.2" text-anchor="middle" font-family="Liberation Sans" font-size="12" fill="#111">Mission</text></svg></div>
<div class="mt">Strengthen Communication Channels<br>with ExoFaun, Inc</div><div class="hrs">2 hrs.</div><div class="lo">Location: <b>ExoFaun</b></div><div class="rq">Requirements:</div><div class="rqs">Requires: 50 business relationship</div><div class="more">more<span class="tri"></span></div>
</div>
<div class="mc" style="left:8px;top:558px">
<div class="oval"><svg width="100" height="150" style="position:absolute;left:0;top:0"><ellipse cx="49.5" cy="74.5" rx="49.5" ry="74.5" fill="#686868"/><ellipse cx="49.5" cy="74.5" rx="45" ry="70" fill="#f4f4f4"/><ellipse cx="49.5" cy="74.5" rx="42.6" ry="67.6" fill="none" stroke="#4a4a4a" stroke-width="3" stroke-dasharray="5.2 1.9"/><ellipse cx="49.5" cy="74.5" rx="38.7" ry="63.7" fill="none" stroke="#4a4a4a" stroke-width="3" stroke-dasharray="5.2 1.9" stroke-dashoffset="3.4"/><ellipse cx="49.5" cy="74.5" rx="36.4" ry="61.4" fill="#fff"/><text x="49.5" y="88" text-anchor="middle" font-family="Liberation Sans" font-size="12" fill="#111">Espionage</text><text x="49.5" y="102" text-anchor="middle" font-family="Liberation Sans" font-size="12" fill="#111">Mission</text></svg></div>
<div class="mt">Perform an Espionage Operation<br>on Earth</div><div class="hrs">2 hrs.</div><div class="lo">Location: <b>Earth</b></div><div class="rq">Requirements:</div><div class="rqs">Requires: 50 tactical resources</div><div class="more">more<span class="tri"></span></div>
</div>
</div>
<svg class="a" style="left:973px;top:224px" width="21" height="618"><defs><linearGradient id="trR" x1="0" x2="1" y1="0" y2="0"><stop offset="0" stop-color="#efeee8"/><stop offset="0.6" stop-color="#fcfcf8"/><stop offset="1" stop-color="#fdfdf9"/></linearGradient><linearGradient id="btR" x1="0" x2="1" y1="0" y2="1"><stop offset="0" stop-color="#d9e4fd"/><stop offset="1" stop-color="#b9cdfa"/></linearGradient></defs><rect x="0" y="0" width="21" height="618" fill="url(#trR)"/><rect x="0.5" y="0.5" width="20" height="617" fill="none" stroke="#fff"/><rect x="2" y="2" width="17" height="19" rx="2" fill="#a9bbdf"/><rect x="1.5" y="1.5" width="18" height="18" rx="2" fill="url(#btR)" stroke="#f4f7fe"/><polyline points="6.5,13 10.5,9 14.5,13" fill="none" stroke="#4d6185" stroke-width="2"/><rect x="2" y="598" width="17" height="19" rx="2" fill="#a9bbdf"/><rect x="1.5" y="597.5" width="18" height="18" rx="2" fill="url(#btR)" stroke="#f4f7fe"/><polyline points="6.5,605 10.5,609 14.5,605" fill="none" stroke="#4d6185" stroke-width="2"/><rect x="2" y="22.5" width="17" height="327" rx="2" fill="#a9bbdf"/><rect x="1.5" y="22.0" width="18" height="326" rx="2" fill="url(#btR)" stroke="#f4f7fe"/><line x1="7.5" y1="182.5" x2="13.5" y2="182.5" stroke="#8faaee" stroke-width="1"/><line x1="7.5" y1="184.5" x2="13.5" y2="184.5" stroke="#8faaee" stroke-width="1"/><line x1="7.5" y1="186.5" x2="13.5" y2="186.5" stroke="#8faaee" stroke-width="1"/><line x1="7.5" y1="188.5" x2="13.5" y2="188.5" stroke="#8faaee" stroke-width="1"/></svg>
</body></html>
